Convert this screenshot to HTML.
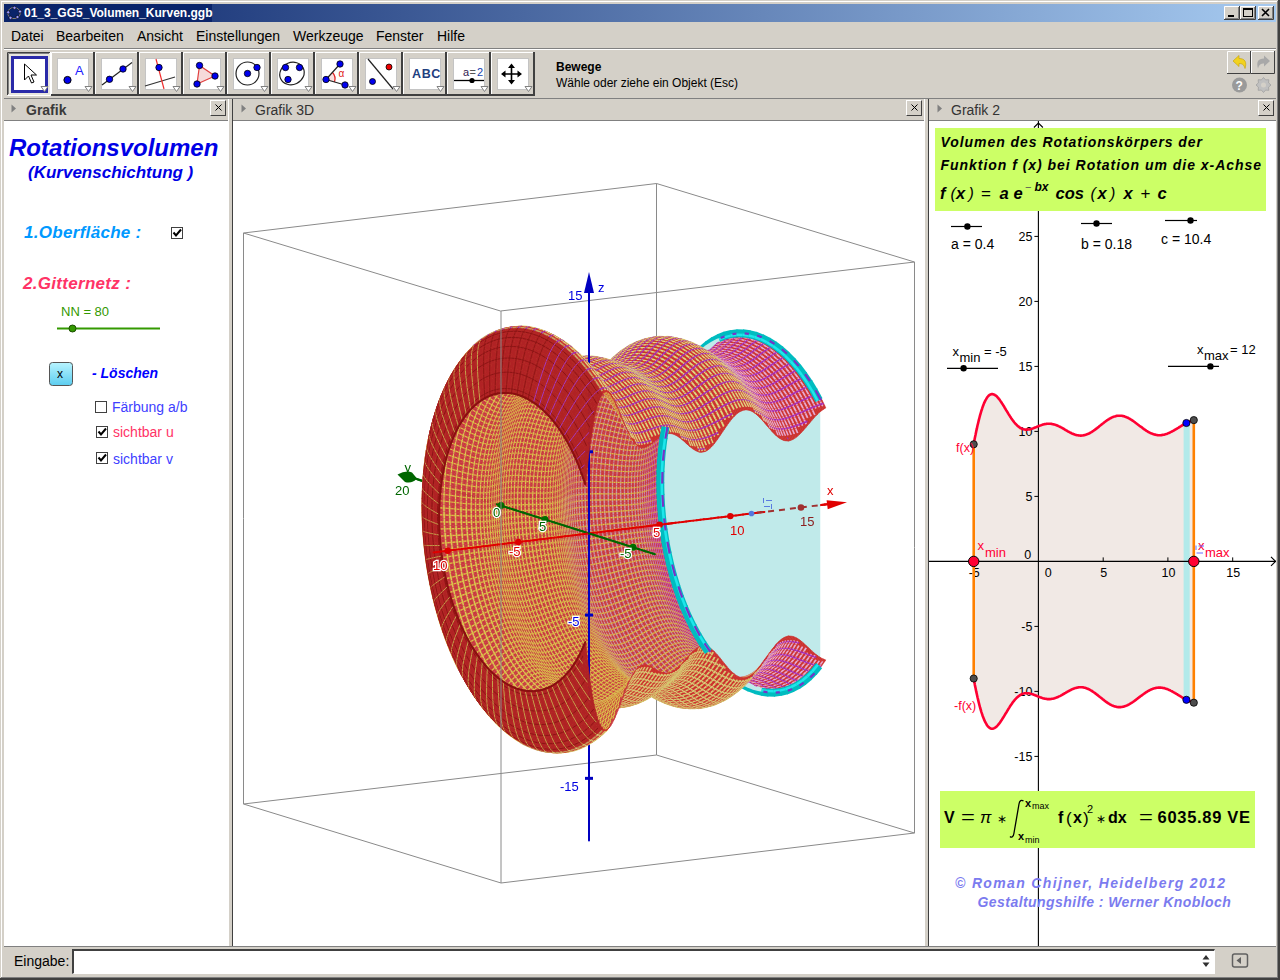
<!DOCTYPE html>
<html><head><meta charset="utf-8">
<style>
*{box-sizing:border-box}
html,body{margin:0;padding:0;width:1280px;height:980px;overflow:hidden;background:#d4d0c8;font-family:"Liberation Sans",sans-serif;position:relative}
.a{position:absolute}
.t{position:absolute;white-space:nowrap;line-height:1}
#title{left:4px;top:4px;width:1272px;height:18px;background:linear-gradient(to right,#0a246a 0%,#a6caf0 100%)}
.wb{position:absolute;top:6px;width:16px;height:14px;background:#d4d0c8;border-top:1px solid #fff;border-left:1px solid #fff;border-right:1px solid #404040;border-bottom:1px solid #404040;box-shadow:inset -1px -1px 0 #808080}
.menu{top:29px;font-size:14px;color:#000}
.tb{position:absolute;top:52px;width:44px;height:44px;background:#d4d0c8;border-top:1px solid #fff;border-left:1px solid #fff;border-right:2px solid #404040;border-bottom:2px solid #404040}
.tb .ic{position:absolute;left:6px;top:6px;width:31px;height:31px;background:#fff}
.tb .dd{position:absolute;right:3px;bottom:3px}
.ph{position:absolute;top:99px;height:22px;background:#d4d0c8;border-bottom:1px solid #808080}
.cb{position:absolute;top:100px;width:16px;height:16px;background:#d4d0c8;border-top:1px solid #fff;border-left:1px solid #fff;border-right:1px solid #404040;border-bottom:1px solid #404040}
.pane{position:absolute;top:121px;height:825px;background:#fff}
</style></head><body>
<!-- window frame -->
<div class="a" style="left:1px;top:1px;width:1px;height:977px;background:#fff"></div>
<div class="a" style="left:1px;top:1px;width:1277px;height:1px;background:#fff"></div>
<div class="a" style="left:1278px;top:0;width:2px;height:980px;background:#404040"></div>
<div class="a" style="left:1277px;top:1px;width:1px;height:977px;background:#808080"></div>
<div class="a" style="left:0;top:978px;width:1280px;height:2px;background:#404040"></div>
<div class="a" style="left:1px;top:977px;width:1277px;height:1px;background:#808080"></div>

<div id="title" class="a"></div><div class="a" style="left:4px;top:4px;width:208px;height:18px;background:#0a246a"></div>
<div class="t" style="left:24px;top:7px;font-size:12px;font-weight:bold;color:#fff">01_3_GG5_Volumen_Kurven.ggb</div>
<svg class="a" style="left:1224px;top:6px" width="50" height="14">
 <g><rect x="0" y="0" width="16" height="14" fill="#d4d0c8"/><path d="M0.5 13V0.5H15" fill="none" stroke="#fff"/><path d="M0 13.5H15.5V0" fill="none" stroke="#404040"/><path d="M1 12.5H14.5V1" fill="none" stroke="#808080"/>
 <rect x="4" y="9" width="6" height="2" fill="#000"/></g>
 <g transform="translate(16 0)"><rect x="0" y="0" width="16" height="14" fill="#d4d0c8"/><path d="M0.5 13V0.5H15" fill="none" stroke="#fff"/><path d="M0 13.5H15.5V0" fill="none" stroke="#404040"/><path d="M1 12.5H14.5V1" fill="none" stroke="#808080"/>
 <rect x="3.5" y="2.5" width="9" height="8" fill="none" stroke="#000"/><rect x="3" y="2" width="10" height="2" fill="#000"/></g>
 <g transform="translate(34 0)"><rect x="0" y="0" width="16" height="14" fill="#d4d0c8"/><path d="M0.5 13V0.5H15" fill="none" stroke="#fff"/><path d="M0 13.5H15.5V0" fill="none" stroke="#404040"/><path d="M1 12.5H14.5V1" fill="none" stroke="#808080"/>
 <path d="M4 3L11 10M11 3L4 10" stroke="#000" stroke-width="1.6"/></g>
</svg>
<svg class="a" style="left:6px;top:5px" width="17" height="16">
 <ellipse cx="8" cy="8" rx="6.3" ry="5.6" fill="none" stroke="#8a8070" stroke-width="1"/>
 <circle cx="8.5" cy="2.8" r="1.6" fill="#9999ff" stroke="#000" stroke-width="0.6"/><circle cx="14" cy="6.5" r="1.6" fill="#9999ff" stroke="#000" stroke-width="0.6"/>
 <circle cx="2.2" cy="7.3" r="1.6" fill="#9999ff" stroke="#000" stroke-width="0.6"/><circle cx="4.5" cy="12.8" r="1.6" fill="#9999ff" stroke="#000" stroke-width="0.6"/><circle cx="11.5" cy="12" r="1.6" fill="#9999ff" stroke="#000" stroke-width="0.6"/>
</svg>

<div class="t menu" style="left:11px">Datei</div>
<div class="t menu" style="left:56px">Bearbeiten</div>
<div class="t menu" style="left:137px">Ansicht</div>
<div class="t menu" style="left:196px">Einstellungen</div>
<div class="t menu" style="left:293px">Werkzeuge</div>
<div class="t menu" style="left:376px">Fenster</div>
<div class="t menu" style="left:437px">Hilfe</div>
<div class="a" style="left:4px;top:48px;width:1272px;height:1px;background:#808080"></div>
<div class="a" style="left:4px;top:49px;width:1272px;height:1px;background:#fff"></div>

<!-- toolbar -->
<div id="toolbar"><svg class="a" style="left:0;top:50px" width="1280" height="48" viewBox="0 50 1280 48">
<rect x="7" y="52" width="43" height="43" fill="#e8e6df"/>
<path d="M7.5 95V52.5H50" fill="none" stroke="#404040" stroke-width="1"/>
<path d="M8.5 94V53.5H49" fill="none" stroke="#808080" stroke-width="1"/>
<path d="M7.5 95.5H50.5V52" fill="none" stroke="#fff" stroke-width="1"/>
<rect x="12.5" y="57.5" width="34" height="34" fill="#fff" stroke="#2a2aa8" stroke-width="3"/>
<path d="M41.0 86.5H48.0L44.5 91.5Z" fill="#fff" stroke="#808080" stroke-width="1"/>
<rect x="51" y="52" width="43" height="44" fill="#d4d0c8"/>
<path d="M51.5 95V52.5H93" fill="none" stroke="#fff" stroke-width="1"/>
<path d="M51 95H94V52" fill="none" stroke="#404040" stroke-width="2"/>
<rect x="57.5" y="58.5" width="31" height="31" fill="#fff" stroke="#c4c4c4" stroke-width="1"/>
<path d="M85.0 86.5H92.0L88.5 91.5Z" fill="#fff" stroke="#808080" stroke-width="1"/>
<rect x="95" y="52" width="43" height="44" fill="#d4d0c8"/>
<path d="M95.5 95V52.5H137" fill="none" stroke="#fff" stroke-width="1"/>
<path d="M95 95H138V52" fill="none" stroke="#404040" stroke-width="2"/>
<rect x="101.5" y="58.5" width="31" height="31" fill="#fff" stroke="#c4c4c4" stroke-width="1"/>
<path d="M129.0 86.5H136.0L132.5 91.5Z" fill="#fff" stroke="#808080" stroke-width="1"/>
<rect x="139" y="52" width="43" height="44" fill="#d4d0c8"/>
<path d="M139.5 95V52.5H181" fill="none" stroke="#fff" stroke-width="1"/>
<path d="M139 95H182V52" fill="none" stroke="#404040" stroke-width="2"/>
<rect x="145.5" y="58.5" width="31" height="31" fill="#fff" stroke="#c4c4c4" stroke-width="1"/>
<path d="M173.0 86.5H180.0L176.5 91.5Z" fill="#fff" stroke="#808080" stroke-width="1"/>
<rect x="183" y="52" width="43" height="44" fill="#d4d0c8"/>
<path d="M183.5 95V52.5H225" fill="none" stroke="#fff" stroke-width="1"/>
<path d="M183 95H226V52" fill="none" stroke="#404040" stroke-width="2"/>
<rect x="189.5" y="58.5" width="31" height="31" fill="#fff" stroke="#c4c4c4" stroke-width="1"/>
<path d="M217.0 86.5H224.0L220.5 91.5Z" fill="#fff" stroke="#808080" stroke-width="1"/>
<rect x="227" y="52" width="43" height="44" fill="#d4d0c8"/>
<path d="M227.5 95V52.5H269" fill="none" stroke="#fff" stroke-width="1"/>
<path d="M227 95H270V52" fill="none" stroke="#404040" stroke-width="2"/>
<rect x="233.5" y="58.5" width="31" height="31" fill="#fff" stroke="#c4c4c4" stroke-width="1"/>
<path d="M261.0 86.5H268.0L264.5 91.5Z" fill="#fff" stroke="#808080" stroke-width="1"/>
<rect x="271" y="52" width="43" height="44" fill="#d4d0c8"/>
<path d="M271.5 95V52.5H313" fill="none" stroke="#fff" stroke-width="1"/>
<path d="M271 95H314V52" fill="none" stroke="#404040" stroke-width="2"/>
<rect x="277.5" y="58.5" width="31" height="31" fill="#fff" stroke="#c4c4c4" stroke-width="1"/>
<path d="M305.0 86.5H312.0L308.5 91.5Z" fill="#fff" stroke="#808080" stroke-width="1"/>
<rect x="315" y="52" width="43" height="44" fill="#d4d0c8"/>
<path d="M315.5 95V52.5H357" fill="none" stroke="#fff" stroke-width="1"/>
<path d="M315 95H358V52" fill="none" stroke="#404040" stroke-width="2"/>
<rect x="321.5" y="58.5" width="31" height="31" fill="#fff" stroke="#c4c4c4" stroke-width="1"/>
<path d="M349.0 86.5H356.0L352.5 91.5Z" fill="#fff" stroke="#808080" stroke-width="1"/>
<rect x="359" y="52" width="43" height="44" fill="#d4d0c8"/>
<path d="M359.5 95V52.5H401" fill="none" stroke="#fff" stroke-width="1"/>
<path d="M359 95H402V52" fill="none" stroke="#404040" stroke-width="2"/>
<rect x="365.5" y="58.5" width="31" height="31" fill="#fff" stroke="#c4c4c4" stroke-width="1"/>
<path d="M393.0 86.5H400.0L396.5 91.5Z" fill="#fff" stroke="#808080" stroke-width="1"/>
<rect x="403" y="52" width="43" height="44" fill="#d4d0c8"/>
<path d="M403.5 95V52.5H445" fill="none" stroke="#fff" stroke-width="1"/>
<path d="M403 95H446V52" fill="none" stroke="#404040" stroke-width="2"/>
<rect x="409.5" y="58.5" width="31" height="31" fill="#fff" stroke="#c4c4c4" stroke-width="1"/>
<path d="M437.0 86.5H444.0L440.5 91.5Z" fill="#fff" stroke="#808080" stroke-width="1"/>
<rect x="447" y="52" width="43" height="44" fill="#d4d0c8"/>
<path d="M447.5 95V52.5H489" fill="none" stroke="#fff" stroke-width="1"/>
<path d="M447 95H490V52" fill="none" stroke="#404040" stroke-width="2"/>
<rect x="453.5" y="58.5" width="31" height="31" fill="#fff" stroke="#c4c4c4" stroke-width="1"/>
<path d="M481.0 86.5H488.0L484.5 91.5Z" fill="#fff" stroke="#808080" stroke-width="1"/>
<rect x="491" y="52" width="43" height="44" fill="#d4d0c8"/>
<path d="M491.5 95V52.5H533" fill="none" stroke="#fff" stroke-width="1"/>
<path d="M491 95H534V52" fill="none" stroke="#404040" stroke-width="2"/>
<rect x="497.5" y="58.5" width="31" height="31" fill="#fff" stroke="#c4c4c4" stroke-width="1"/>
<path d="M525.0 86.5H532.0L528.5 91.5Z" fill="#fff" stroke="#808080" stroke-width="1"/>
<path d="M24.5 64V80L28.5 76L31.5 83L34.0 82L31.0 75H36.5Z" fill="#fff" stroke="#000" stroke-width="1" stroke-linejoin="miter"/>
<circle cx="67.5" cy="80" r="3.6" fill="#0000ee" stroke="#000" stroke-width="1"/>
<text x="75" y="74.5" font-family="Liberation Sans" font-size="13" fill="#2020ff">A</text>
<line x1="102" y1="85" x2="132" y2="62.5" stroke="#222" stroke-width="1.2"/>
<circle cx="109.5" cy="79.3" r="3.2" fill="#0000ee" stroke="#000" stroke-width="0.8"/><circle cx="123" cy="69" r="3.2" fill="#0000ee" stroke="#000" stroke-width="0.8"/>
<line x1="145" y1="86" x2="175" y2="77" stroke="#333" stroke-width="1.2"/>
<line x1="156" y1="59" x2="164" y2="89" stroke="#f03030" stroke-width="1.2"/>
<circle cx="159" cy="67.5" r="3.2" fill="#0000ee" stroke="#000" stroke-width="0.8"/>
<path d="M199.5 65.5L215 76L197 84Z" fill="#f6dada" stroke="#e04040" stroke-width="1.2"/>
<circle cx="199.5" cy="65.5" r="3.2" fill="#0000ee" stroke="#000" stroke-width="0.8"/>
<circle cx="215" cy="76" r="3.2" fill="#0000ee" stroke="#000" stroke-width="0.8"/>
<circle cx="197" cy="84" r="3.2" fill="#0000ee" stroke="#000" stroke-width="0.8"/>
<circle cx="247.5" cy="73.5" r="11.5" fill="none" stroke="#222" stroke-width="1.2"/>
<circle cx="247.5" cy="73.5" r="3.2" fill="#0000ee" stroke="#000" stroke-width="0.8"/><circle cx="257" cy="67.5" r="3.2" fill="#0000ee" stroke="#000" stroke-width="0.8"/>
<ellipse cx="292" cy="73.5" rx="12.5" ry="11" transform="rotate(-25 292 73.5)" fill="none" stroke="#222" stroke-width="1.2"/>
<circle cx="285.5" cy="67.5" r="3.2" fill="#0000ee" stroke="#000" stroke-width="0.8"/>
<circle cx="299.5" cy="67.5" r="3.2" fill="#0000ee" stroke="#000" stroke-width="0.8"/>
<circle cx="288" cy="79.5" r="3.2" fill="#0000ee" stroke="#000" stroke-width="0.8"/>
<path d="M326 79.5L332.5 72.5A9 9 0 0 1 334.5 82Z" fill="#fae0e0"/>
<path d="M332.5 72.5A9.5 9.5 0 0 1 334.5 82" fill="none" stroke="#e02020" stroke-width="1.2"/>
<path d="M340 64L326 79.5L345 85" fill="none" stroke="#222" stroke-width="1.2"/>
<text x="338.5" y="77" font-family="Liberation Sans" font-size="10" fill="#e02020">α</text>
<circle cx="340" cy="64" r="3.2" fill="#0000ee" stroke="#000" stroke-width="0.8"/>
<circle cx="326" cy="79.5" r="3.2" fill="#0000ee" stroke="#000" stroke-width="0.8"/>
<circle cx="345" cy="85" r="3.2" fill="#0000ee" stroke="#000" stroke-width="0.8"/>
<line x1="368" y1="59" x2="393" y2="89" stroke="#222" stroke-width="1.2"/>
<circle cx="372.5" cy="81.5" r="3" fill="#0000ee" stroke="#000" stroke-width="0.8"/><circle cx="389" cy="67" r="3" fill="#ee0000" stroke="#000" stroke-width="0.8"/>
<text x="412" y="78" font-family="Liberation Sans" font-size="12.5" font-weight="bold" fill="#1f3f7f" letter-spacing="0.6">ABC</text>
<text x="463" y="76" font-family="Liberation Sans" font-size="11" fill="#302050">a</text><text x="469.5" y="76" font-family="Liberation Sans" font-size="11" fill="#555">=</text><text x="477" y="76" font-family="Liberation Sans" font-size="11" fill="#1040b0">2</text>
<line x1="454" y1="80.5" x2="484" y2="80.5" stroke="#000" stroke-width="1.3"/><circle cx="472" cy="80.5" r="2.6" fill="#000"/>
<path d="M511.5 65V83M502.5 74H520.5" stroke="#000" stroke-width="1.6"/>
<path d="M511.5 63.5L508.0 68H515.0Z M511.5 84.5L508.0 80H515.0Z M501.0 74L505.5 70.5V77.5Z M522.0 74L517.5 70.5V77.5Z" fill="#000"/>
<rect x="1227" y="51" width="24" height="23" fill="#d4d0c8"/>
<path d="M1227.5 73V51.5H1250" fill="none" stroke="#fff"/><path d="M1227 73.5H1250.5V51" fill="none" stroke="#404040"/>
<rect x="1251" y="51" width="24" height="23" fill="#d4d0c8"/>
<path d="M1251.5 73V51.5H1274" fill="none" stroke="#fff"/><path d="M1251 73.5H1274.5V51" fill="none" stroke="#404040"/>
<path d="M1233 61L1239 55.5V58.5C1245 58.5 1247 62 1245 68.5C1244 64.5 1242 63.5 1239 63.5V66.5Z" fill="#f2d21e" stroke="#c8a810" stroke-width="0.7"/>
<path d="M1270 61L1264 55.5V58.5C1258 58.5 1256 62 1258 68.5C1259 64.5 1261 63.5 1264 63.5V66.5Z" fill="#a8a8a8"/>
<circle cx="1239.5" cy="85" r="7.5" fill="#9a9a9a"/><text x="1235.5" y="89.5" font-family="Liberation Sans" font-size="12" font-weight="bold" fill="#fff">?</text>
<path d="M1271.0 85.0L1268.6 87.1L1268.8 90.3L1265.6 90.1L1263.5 92.5L1261.4 90.1L1258.2 90.3L1258.4 87.1L1256.0 85.0L1258.4 82.9L1258.2 79.7L1261.4 79.9L1263.5 77.5L1265.6 79.9L1268.8 79.7L1268.6 82.9Z" fill="#c0c0c0" stroke="#a0a0a0" stroke-width="0.8"/><circle cx="1263.5" cy="85" r="2.5" fill="#d4d0c8"/>
</svg></div>

<div class="a" style="left:4px;top:98px;width:1272px;height:1px;background:#808080"></div>

<!-- panel headers -->
<div class="ph" style="left:4px;width:225px"></div>
<div class="ph" style="left:233px;width:691px"></div>
<div class="ph" style="left:929px;width:347px"></div>
<div class="a" style="left:228px;top:99px;width:1px;height:847px;background:#fff"></div>
<div class="a" style="left:232px;top:99px;width:1px;height:847px;background:#404040"></div>
<div class="a" style="left:924px;top:99px;width:1px;height:847px;background:#fff"></div>
<div class="a" style="left:928px;top:99px;width:1px;height:847px;background:#404040"></div>

<div class="pane" style="left:4px;width:224px"></div>
<div class="pane" style="left:233px;width:691px"><svg id="fb" style="position:absolute;left:0;top:0" width="691" height="825" shape-rendering="crispEdges">
<path fill="#6464dc" d="M354 156h6v6H354z"/>
<path fill="#c8c8f0" d="M348 162h6v6H348zM366 162h6v6H366zM336 168h6v6H336zM366 168h6v6H366zM342 174h6v6H342zM330 660h12v6H330zM330 666h6v6H330z"/>
<path fill="#1414c8" d="M354 162h6v6H354z"/>
<path fill="#b4b4f0" d="M342 168h12v6H342zM336 174h6v6H336zM354 198h6v6H354zM354 204h6v6H354zM354 630h6v6H354zM354 678h6v6H354zM354 714h6v6H354z"/>
<path fill="#3c3cc8" d="M354 168h6v6H354z"/>
<path fill="#a0a0dc" d="M354 174h6v6H354zM354 636h6v6H354zM354 642h6v6H354z"/>
<path fill="#a0a0f0" d="M354 180h6v6H354zM354 186h6v6H354zM354 192h6v6H354zM354 210h6v6H354zM354 216h6v6H354zM354 222h6v6H354zM354 228h6v6H354zM354 648h6v6H354zM354 660h6v6H354zM354 666h6v6H354zM354 672h6v6H354zM354 684h6v6H354zM354 690h6v6H354zM354 696h6v6H354zM354 702h6v6H354zM354 708h6v6H354z"/>
<path fill="#dcc8b4" d="M264 204h6v6H264zM450 216h6v6H450zM186 420h6v6H186zM420 576h6v6H420zM318 630h6v6H318z"/>
<path fill="#dc8c8c" d="M270 204h6v6H270zM444 216h6v6H444zM510 264h6v6H510zM516 276h6v6H516zM522 282h6v6H522zM204 438h6v6H204zM240 576h6v6H240z"/>
<path fill="#c86464" d="M276 204h6v6H276zM330 222h6v6H330zM408 222h36v6H408zM336 228h6v6H336zM402 228h18v6H402zM426 228h30v6H426zM396 234h36v6H396zM438 234h6v6H438zM456 234h6v6H456zM360 240h12v6H360zM408 240h18v6H408zM444 240h6v6H444zM354 246h6v6H354zM372 246h6v6H372zM420 246h36v6H420zM474 246h6v6H474zM378 252h6v6H378zM432 252h24v6H432zM474 252h12v6H474zM378 258h6v6H378zM444 258h18v6H444zM366 264h6v6H366zM384 264h6v6H384zM456 264h12v6H456zM474 264h12v6H474zM378 270h6v6H378zM396 270h6v6H396zM456 270h6v6H456zM492 270h6v6H492zM204 276h6v6H204zM402 276h12v6H402zM462 276h6v6H462zM474 276h12v6H474zM390 282h12v6H390zM462 282h6v6H462zM492 282h6v6H492zM402 288h12v6H402zM474 288h12v6H474zM198 294h6v6H198zM372 294h6v6H372zM414 294h12v6H414zM462 294h6v6H462zM576 294h6v6H576zM366 300h6v6H366zM402 300h6v6H402zM480 300h6v6H480zM360 306h6v6H360zM372 306h6v6H372zM390 306h6v6H390zM408 306h12v6H408zM468 306h6v6H468zM360 312h6v6H360zM468 312h12v6H468zM366 318h6v6H366zM378 318h6v6H378zM408 318h6v6H408zM378 324h6v6H378zM414 324h6v6H414zM468 324h6v6H468zM360 330h6v6H360zM372 330h6v6H372zM384 330h6v6H384zM396 330h24v6H396zM360 336h6v6H360zM372 336h6v6H372zM384 336h6v6H384zM396 336h24v6H396zM372 342h6v6H372zM384 342h6v6H384zM402 342h18v6H402zM366 348h6v6H366zM390 348h6v6H390zM402 348h18v6H402zM336 354h6v6H336zM366 354h6v6H366zM390 354h24v6H390zM336 360h6v6H336zM366 360h6v6H366zM378 360h6v6H378zM390 360h12v6H390zM408 360h6v6H408zM336 366h18v6H336zM366 366h6v6H366zM378 366h6v6H378zM390 366h24v6H390zM342 372h6v6H342zM402 372h12v6H402zM342 378h6v6H342zM402 378h12v6H402zM348 384h6v6H348zM378 384h12v6H378zM396 384h6v6H396zM408 384h6v6H408zM360 390h24v6H360zM396 390h6v6H396zM408 390h6v6H408zM348 402h6v6H348zM384 402h6v6H384zM396 408h18v6H396zM348 414h6v6H348zM402 414h6v6H402zM408 420h6v6H408zM366 426h6v6H366zM348 432h6v6H348zM378 432h6v6H378zM402 432h6v6H402zM396 438h6v6H396zM360 444h6v6H360zM372 444h6v6H372zM420 444h6v6H420zM360 450h6v6H360zM384 450h6v6H384zM414 450h12v6H414zM360 456h6v6H360zM390 456h6v6H390zM420 456h6v6H420zM360 462h12v6H360zM414 462h12v6H414zM360 468h6v6H360zM372 468h6v6H372zM396 468h6v6H396zM408 468h12v6H408zM426 468h6v6H426zM366 474h6v6H366zM396 474h6v6H396zM408 474h6v6H408zM372 480h6v6H372zM396 480h6v6H396zM366 486h6v6H366zM396 486h6v6H396zM408 486h6v6H408zM420 486h18v6H420zM372 492h6v6H372zM408 492h6v6H408zM420 492h6v6H420zM378 498h6v6H378zM378 504h6v6H378zM396 504h6v6H396zM432 504h6v6H432zM384 510h6v6H384zM426 510h6v6H426zM396 516h6v6H396zM402 540h6v6H402z"/>
<path fill="#c85050" d="M282 204h6v6H282zM360 294h6v6H360zM492 294h6v6H492zM360 300h6v6H360zM552 312h12v6H552zM396 318h6v6H396zM342 348h6v6H342zM360 360h6v6H360zM390 402h6v6H390z"/>
<path fill="#c86450" d="M288 204h6v6H288zM246 216h6v6H246zM342 234h6v6H342zM348 240h6v6H348zM456 252h6v6H456zM450 264h6v6H450zM480 270h6v6H480zM366 276h6v6H366zM246 282h6v6H246zM366 282h12v6H366zM246 288h6v6H246zM366 288h18v6H366zM462 288h6v6H462zM582 288h6v6H582zM240 294h12v6H240zM294 294h6v6H294zM366 294h6v6H366zM378 294h12v6H378zM234 300h12v6H234zM252 300h6v6H252zM300 300h6v6H300zM372 300h6v6H372zM384 300h6v6H384zM468 300h6v6H468zM486 300h6v6H486zM246 306h6v6H246zM258 306h6v6H258zM306 306h6v6H306zM366 306h6v6H366zM378 306h12v6H378zM480 306h12v6H480zM228 312h18v6H228zM312 312h6v6H312zM366 312h18v6H366zM390 312h6v6H390zM228 318h12v6H228zM246 318h6v6H246zM318 318h6v6H318zM360 318h6v6H360zM372 318h6v6H372zM384 318h6v6H384zM222 324h30v6H222zM294 324h6v6H294zM360 324h18v6H360zM384 324h6v6H384zM402 324h6v6H402zM462 324h6v6H462zM222 330h12v6H222zM240 330h6v6H240zM252 330h6v6H252zM282 330h6v6H282zM300 330h6v6H300zM366 330h6v6H366zM378 330h6v6H378zM390 330h6v6H390zM222 336h12v6H222zM240 336h6v6H240zM288 336h6v6H288zM300 336h6v6H300zM336 336h6v6H336zM366 336h6v6H366zM378 336h6v6H378zM390 336h6v6H390zM216 342h12v6H216zM234 342h6v6H234zM246 342h6v6H246zM288 342h6v6H288zM306 342h6v6H306zM360 342h12v6H360zM378 342h6v6H378zM390 342h12v6H390zM222 348h12v6H222zM246 348h6v6H246zM294 348h6v6H294zM312 348h6v6H312zM360 348h6v6H360zM372 348h18v6H372zM396 348h6v6H396zM216 354h18v6H216zM294 354h6v6H294zM342 354h6v6H342zM360 354h6v6H360zM372 354h18v6H372zM216 360h12v6H216zM240 360h6v6H240zM282 360h6v6H282zM294 360h6v6H294zM342 360h6v6H342zM372 360h6v6H372zM384 360h6v6H384zM402 360h6v6H402zM234 366h6v6H234zM282 366h6v6H282zM360 366h6v6H360zM372 366h6v6H372zM384 366h6v6H384zM210 372h6v6H210zM282 372h6v6H282zM300 372h6v6H300zM360 372h6v6H360zM372 372h6v6H372zM384 372h6v6H384zM210 378h6v6H210zM234 378h12v6H234zM282 378h6v6H282zM360 378h6v6H360zM372 378h6v6H372zM384 378h6v6H384zM234 384h12v6H234zM360 384h6v6H360zM372 384h6v6H372zM240 390h6v6H240zM366 396h6v6H366zM378 396h6v6H378zM390 396h6v6H390zM210 402h12v6H210zM294 402h6v6H294zM366 402h6v6H366zM378 402h6v6H378zM210 408h18v6H210zM240 408h6v6H240zM294 408h6v6H294zM336 408h6v6H336zM390 408h6v6H390zM222 414h12v6H222zM342 414h6v6H342zM384 414h6v6H384zM396 414h6v6H396zM228 420h6v6H228zM360 420h6v6H360zM372 420h6v6H372zM378 426h6v6H378zM234 432h6v6H234zM366 432h6v6H366zM234 438h12v6H234zM360 438h6v6H360zM372 438h6v6H372zM384 438h6v6H384zM240 444h6v6H240zM378 444h6v6H378zM390 444h6v6H390zM402 444h6v6H402zM216 450h6v6H216zM366 450h6v6H366zM378 450h6v6H378zM396 450h6v6H396zM216 456h12v6H216zM372 456h6v6H372zM384 456h6v6H384zM402 456h6v6H402zM222 462h6v6H222zM378 462h6v6H378zM390 462h12v6H390zM228 468h6v6H228zM246 468h6v6H246zM384 468h6v6H384zM402 468h6v6H402zM228 474h6v6H228zM378 474h6v6H378zM390 474h6v6H390zM228 480h6v6H228zM384 480h6v6H384zM402 480h6v6H402zM234 486h6v6H234zM246 486h6v6H246zM378 486h6v6H378zM390 486h6v6H390zM234 492h6v6H234zM384 492h6v6H384zM402 492h6v6H402zM396 498h6v6H396zM240 504h6v6H240zM390 504h6v6H390zM408 504h6v6H408zM402 510h6v6H402zM450 534h6v6H450zM480 534h6v6H480zM408 540h12v6H408zM486 540h6v6H486zM426 546h6v6H426zM492 546h6v6H492zM498 552h6v6H498zM246 582h6v6H246zM276 612h6v6H276z"/>
<path fill="#c87878" d="M294 204h6v6H294zM324 216h6v6H324zM414 216h6v6H414zM432 216h6v6H432zM402 222h6v6H402zM390 228h12v6H390zM384 234h12v6H384zM396 240h12v6H396zM480 240h6v6H480zM366 252h6v6H366zM396 252h6v6H396zM414 252h6v6H414zM402 258h6v6H402zM486 258h6v6H486zM372 264h6v6H372zM438 276h6v6H438zM420 282h6v6H420zM426 300h12v6H426zM450 300h6v6H450zM456 306h6v6H456zM192 318h6v6H192zM450 318h6v6H450zM474 324h6v6H474zM186 372h6v6H186zM186 378h6v6H186zM186 384h6v6H186zM186 390h6v6H186zM492 390h12v6H492zM414 408h6v6H414zM192 450h6v6H192zM444 504h6v6H444zM450 510h6v6H450zM210 516h6v6H210zM570 522h6v6H570zM576 528h6v6H576z"/>
<path fill="#dca0a0" d="M300 204h6v6H300zM252 210h6v6H252zM408 216h6v6H408zM462 222h6v6H462zM378 234h6v6H378zM192 312h6v6H192zM192 456h6v6H192zM216 534h6v6H216zM228 558h6v6H228zM294 624h6v6H294z"/>
<path fill="#f0dcc8" d="M306 204h6v6H306zM390 222h6v6H390zM492 576h6v6H492zM432 582h6v6H432zM480 582h6v6H480zM258 600h6v6H258zM330 630h6v6H330z"/>
<path fill="#c8f0f0" d="M498 204h6v6H498zM510 204h6v6H510zM540 216h6v6H540zM504 294h18v6H504zM498 300h30v6H498zM582 300h6v6H582zM498 306h36v6H498zM576 306h12v6H576zM492 312h48v6H492zM570 312h18v6H570zM438 318h6v6H438zM486 318h60v6H486zM564 318h24v6H564zM438 324h12v6H438zM480 324h108v6H480zM438 330h24v6H438zM474 330h114v6H474zM438 336h150v6H438zM432 342h156v6H432zM432 348h156v6H432zM432 354h156v6H432zM432 360h156v6H432zM432 366h156v6H432zM432 372h96v6H432zM534 372h54v6H534zM432 378h96v6H432zM540 378h24v6H540zM570 378h12v6H570zM438 384h90v6H438zM438 390h42v6H438zM546 390h42v6H546zM504 396h60v6H504zM582 396h6v6H582zM450 402h48v6H450zM516 402h48v6H516zM582 402h6v6H582zM438 408h60v6H438zM516 408h72v6H516zM438 414h150v6H438zM438 420h150v6H438zM444 426h144v6H444zM444 432h144v6H444zM444 438h144v6H444zM444 444h144v6H444zM450 450h138v6H450zM450 456h138v6H450zM450 462h138v6H450zM456 468h132v6H456zM456 474h132v6H456zM456 480h132v6H456zM462 486h126v6H462zM462 492h126v6H462zM468 498h120v6H468zM468 504h120v6H468zM474 510h78v6H474zM564 510h24v6H564zM474 516h66v6H474zM570 516h18v6H570zM480 522h54v6H480zM576 522h12v6H576zM486 528h48v6H486zM492 534h36v6H492zM498 540h24v6H498zM504 546h12v6H504z"/>
<path fill="#b4f0f0" d="M504 204h6v6H504zM570 246h6v6H570zM432 336h6v6H432zM528 372h6v6H528zM432 384h6v6H432zM438 426h6v6H438zM444 450h6v6H444zM450 468h6v6H450zM462 498h6v6H462zM516 570h6v6H516z"/>
<path fill="#b43c3c" d="M258 210h6v6H258zM306 210h6v6H306zM348 246h6v6H348zM354 252h6v6H354zM360 288h6v6H360zM354 318h6v6H354zM342 342h6v6H342zM222 540h6v6H222zM228 552h6v6H228zM264 588h6v6H264zM258 594h6v6H258zM288 618h6v6H288z"/>
<path fill="#a03c3c" d="M264 210h6v6H264zM264 228h6v6H264zM264 240h6v6H264zM264 252h6v6H264zM264 258h6v6H264zM264 594h6v6H264z"/>
<path fill="#a02828" d="M270 210h12v6H270zM288 210h12v6H288zM252 216h36v6H252zM294 216h12v6H294zM312 216h6v6H312zM246 222h6v6H246zM264 222h30v6H264zM306 222h6v6H306zM246 228h12v6H246zM294 228h6v6H294zM246 234h6v6H246zM258 234h36v6H258zM246 240h12v6H246zM294 240h12v6H294zM270 246h12v6H270zM252 252h12v6H252zM282 252h12v6H282zM246 258h6v6H246zM258 264h6v6H258zM270 264h18v6H270zM258 270h6v6H258zM282 270h6v6H282zM294 270h6v6H294zM354 270h6v6H354zM294 276h6v6H294zM234 282h6v6H234zM306 282h6v6H306zM312 288h6v6H312zM318 294h6v6H318zM222 300h6v6H222zM216 312h6v6H216zM330 312h6v6H330zM336 318h6v6H336zM210 324h6v6H210zM336 324h6v6H336zM210 330h6v6H210zM342 330h6v6H342zM192 336h6v6H192zM342 336h6v6H342zM192 348h6v6H192zM204 348h6v6H204zM192 354h6v6H192zM348 354h6v6H348zM204 360h6v6H204zM204 366h6v6H204zM204 372h6v6H204zM192 414h6v6H192zM204 414h6v6H204zM204 420h6v6H204zM192 426h6v6H192zM192 432h6v6H192zM204 432h6v6H204zM210 456h6v6H210zM210 462h6v6H210zM198 468h6v6H198zM210 468h6v6H210zM216 480h6v6H216zM216 486h6v6H216zM210 504h6v6H210zM234 522h6v6H234zM240 528h6v6H240zM240 534h6v6H240zM246 540h6v6H246zM342 540h6v6H342zM252 546h6v6H252zM336 546h6v6H336zM318 564h6v6H318zM294 570h12v6H294z"/>
<path fill="#b42828" d="M282 210h6v6H282zM300 210h6v6H300zM288 216h6v6H288zM306 216h6v6H306zM252 222h12v6H252zM294 222h12v6H294zM312 222h6v6H312zM258 228h6v6H258zM270 228h24v6H270zM300 228h12v6H300zM318 228h6v6H318zM330 228h6v6H330zM252 234h6v6H252zM294 234h18v6H294zM318 234h24v6H318zM258 240h6v6H258zM270 240h24v6H270zM306 240h6v6H306zM324 240h6v6H324zM336 240h6v6H336zM246 246h18v6H246zM282 246h24v6H282zM312 246h6v6H312zM330 246h6v6H330zM342 246h6v6H342zM246 252h6v6H246zM270 252h12v6H270zM294 252h12v6H294zM318 252h6v6H318zM330 252h24v6H330zM252 258h12v6H252zM270 258h36v6H270zM324 258h6v6H324zM336 258h6v6H336zM348 258h6v6H348zM246 264h12v6H246zM288 264h12v6H288zM306 264h12v6H306zM330 264h6v6H330zM342 264h6v6H342zM354 264h12v6H354zM210 270h6v6H210zM246 270h6v6H246zM312 270h12v6H312zM330 270h12v6H330zM348 270h6v6H348zM324 276h6v6H324zM336 276h6v6H336zM348 276h6v6H348zM360 276h6v6H360zM204 282h6v6H204zM330 282h6v6H330zM342 282h6v6H342zM354 282h12v6H354zM204 288h6v6H204zM228 288h6v6H228zM318 288h6v6H318zM330 288h12v6H330zM348 288h12v6H348zM204 294h12v6H204zM324 294h6v6H324zM336 294h6v6H336zM348 294h6v6H348zM330 300h6v6H330zM342 300h6v6H342zM354 300h6v6H354zM198 306h6v6H198zM336 306h6v6H336zM348 306h12v6H348zM198 312h18v6H198zM342 312h6v6H342zM198 318h6v6H198zM348 318h6v6H348zM342 324h12v6H342zM198 330h12v6H198zM198 336h6v6H198zM348 336h6v6H348zM192 342h18v6H192zM348 342h6v6H348zM198 348h6v6H198zM348 348h6v6H348zM198 354h6v6H198zM192 360h12v6H192zM192 366h12v6H192zM192 372h12v6H192zM192 378h18v6H192zM198 384h6v6H198zM192 390h12v6H192zM198 396h12v6H198zM192 402h18v6H192zM204 408h6v6H204zM198 414h6v6H198zM192 420h6v6H192zM198 432h6v6H198zM198 450h12v6H198zM198 456h6v6H198zM198 462h12v6H198zM204 468h6v6H204zM204 474h12v6H204zM204 480h12v6H204zM204 486h12v6H204zM204 492h18v6H204zM210 498h6v6H210zM216 504h6v6H216zM216 510h6v6H216zM222 516h12v6H222zM216 522h6v6H216zM228 522h6v6H228zM348 528h6v6H348zM222 534h6v6H222zM348 534h6v6H348zM348 540h6v6H348zM348 546h6v6H348zM234 552h6v6H234zM336 552h12v6H336zM234 558h6v6H234zM330 558h6v6H330zM348 558h6v6H348zM342 564h6v6H342zM330 570h12v6H330zM354 570h6v6H354zM342 576h18v6H342zM336 582h12v6H336zM354 582h6v6H354zM324 588h12v6H324zM348 588h6v6H348zM312 594h12v6H312zM342 594h6v6H342zM354 594h6v6H354zM294 600h12v6H294zM330 600h12v6H330zM348 600h18v6H348zM324 606h12v6H324zM342 606h24v6H342zM312 612h12v6H312zM336 612h24v6H336zM294 618h18v6H294zM324 618h12v6H324zM342 618h6v6H342zM312 624h18v6H312z"/>
<path fill="#c87864" d="M312 210h6v6H312zM420 216h12v6H420zM444 222h18v6H444zM456 228h12v6H456zM462 234h12v6H462zM354 240h6v6H354zM372 240h6v6H372zM432 240h6v6H432zM468 240h6v6H468zM360 246h12v6H360zM378 246h12v6H378zM408 246h12v6H408zM360 252h6v6H360zM372 252h6v6H372zM384 252h12v6H384zM420 252h12v6H420zM486 252h6v6H486zM372 258h6v6H372zM390 258h12v6H390zM426 258h12v6H426zM474 258h6v6H474zM492 258h6v6H492zM378 264h6v6H378zM396 264h6v6H396zM432 264h12v6H432zM498 264h6v6H498zM384 270h12v6H384zM402 270h12v6H402zM438 270h12v6H438zM462 270h6v6H462zM384 276h12v6H384zM414 276h6v6H414zM444 276h6v6H444zM504 276h6v6H504zM384 282h6v6H384zM414 282h6v6H414zM444 282h12v6H444zM480 282h6v6H480zM396 288h6v6H396zM450 288h6v6H450zM492 288h6v6H492zM408 294h6v6H408zM426 294h6v6H426zM456 294h6v6H456zM378 300h6v6H378zM396 300h6v6H396zM408 300h6v6H408zM420 300h6v6H420zM456 300h6v6H456zM402 306h6v6H402zM420 306h6v6H420zM462 306h6v6H462zM384 312h6v6H384zM444 312h6v6H444zM402 318h6v6H402zM462 318h6v6H462zM390 324h6v6H390zM336 342h6v6H336zM336 348h6v6H336zM336 372h6v6H336zM348 372h6v6H348zM366 372h6v6H366zM378 372h6v6H378zM390 372h12v6H390zM330 378h12v6H330zM348 378h6v6H348zM366 378h6v6H366zM378 378h6v6H378zM390 378h12v6H390zM330 384h18v6H330zM366 384h6v6H366zM390 384h6v6H390zM402 384h6v6H402zM330 390h24v6H330zM384 390h12v6H384zM402 390h6v6H402zM330 396h24v6H330zM360 396h6v6H360zM372 396h6v6H372zM384 396h6v6H384zM396 396h18v6H396zM342 402h6v6H342zM360 402h6v6H360zM372 402h6v6H372zM390 414h6v6H390zM408 414h6v6H408zM336 420h18v6H336zM366 420h6v6H366zM336 426h18v6H336zM360 426h6v6H360zM372 426h6v6H372zM384 426h6v6H384zM336 432h12v6H336zM360 432h6v6H360zM372 432h6v6H372zM408 432h6v6H408zM342 438h12v6H342zM366 438h6v6H366zM378 438h6v6H378zM390 438h6v6H390zM402 438h18v6H402zM342 444h12v6H342zM366 444h6v6H366zM384 444h6v6H384zM396 444h6v6H396zM408 444h12v6H408zM342 450h12v6H342zM372 450h6v6H372zM390 450h6v6H390zM402 450h12v6H402zM348 456h6v6H348zM366 456h6v6H366zM378 456h6v6H378zM396 456h6v6H396zM408 456h12v6H408zM348 462h6v6H348zM372 462h6v6H372zM384 462h6v6H384zM402 462h12v6H402zM348 468h6v6H348zM366 468h6v6H366zM378 468h6v6H378zM390 468h6v6H390zM420 468h6v6H420zM360 474h6v6H360zM372 474h6v6H372zM384 474h6v6H384zM402 474h6v6H402zM414 474h18v6H414zM360 480h12v6H360zM378 480h6v6H378zM390 480h6v6H390zM408 480h30v6H408zM360 486h6v6H360zM372 486h6v6H372zM384 486h6v6H384zM402 486h6v6H402zM414 486h6v6H414zM360 492h12v6H360zM378 492h6v6H378zM390 492h12v6H390zM414 492h6v6H414zM426 492h12v6H426zM204 498h6v6H204zM360 498h18v6H360zM384 498h12v6H384zM402 498h12v6H402zM420 498h24v6H420zM366 504h12v6H366zM384 504h6v6H384zM402 504h6v6H402zM414 504h18v6H414zM438 504h6v6H438zM366 510h18v6H366zM390 510h12v6H390zM408 510h12v6H408zM432 510h18v6H432zM372 516h24v6H372zM402 516h18v6H402zM426 516h30v6H426zM378 522h84v6H378zM384 528h72v6H384zM384 534h66v6H384zM390 540h12v6H390zM420 540h6v6H420zM432 540h12v6H432zM396 546h6v6H396zM516 552h6v6H516z"/>
<path fill="#f0c8c8" d="M318 210h6v6H318zM402 216h6v6H402zM372 234h6v6H372zM216 246h6v6H216zM192 306h6v6H192zM186 342h6v6H186zM600 384h6v6H600zM192 462h6v6H192zM198 486h6v6H198zM210 522h6v6H210zM588 534h6v6H588zM312 630h6v6H312z"/>
<path fill="#a0f0f0" d="M480 210h6v6H480z"/>
<path fill="#3cb4c8" d="M486 210h6v6H486zM534 216h6v6H534zM570 258h6v6H570zM576 546h6v6H576zM552 564h6v6H552zM528 570h6v6H528z"/>
<path fill="#14c8c8" d="M492 210h6v6H492zM504 210h6v6H504zM516 210h6v6H516zM528 216h6v6H528zM540 222h6v6H540zM552 234h6v6H552zM564 246h6v6H564zM576 264h6v6H576zM426 318h6v6H426zM426 324h6v6H426zM432 432h6v6H432zM438 456h6v6H438zM558 564h6v6H558zM534 570h6v6H534z"/>
<path fill="#28a0c8" d="M498 210h6v6H498zM510 210h6v6H510zM426 336h6v6H426zM426 372h6v6H426zM462 510h6v6H462zM468 522h6v6H468z"/>
<path fill="#50b4dc" d="M522 210h6v6H522z"/>
<path fill="#a0dcf0" d="M528 210h6v6H528z"/>
<path fill="#b4503c" d="M318 216h6v6H318zM240 222h6v6H240zM234 228h6v6H234zM210 264h6v6H210zM306 288h6v6H306zM312 294h6v6H312zM336 330h6v6H336zM210 342h6v6H210zM228 504h6v6H228zM234 516h6v6H234zM216 528h6v6H216zM354 552h6v6H354zM354 558h6v6H354zM264 564h6v6H264zM306 564h6v6H306zM264 570h6v6H264zM264 576h6v6H264zM264 582h6v6H264zM252 588h6v6H252zM264 600h6v6H264zM270 606h6v6H270zM336 624h6v6H336z"/>
<path fill="#c88c64" d="M438 216h6v6H438zM378 240h6v6H378zM408 264h6v6H408zM414 270h6v6H414zM432 294h6v6H432zM390 300h6v6H390zM450 306h6v6H450zM402 312h6v6H402zM456 318h6v6H456zM264 396h6v6H264zM312 402h6v6H312zM336 438h6v6H336zM342 456h6v6H342zM342 462h6v6H342zM348 474h6v6H348zM348 480h6v6H348zM336 504h6v6H336zM360 504h6v6H360zM366 516h6v6H366zM372 522h6v6H372zM372 528h12v6H372zM378 534h6v6H378zM384 540h6v6H384zM390 546h6v6H390zM396 552h6v6H396zM354 618h6v6H354zM342 624h6v6H342z"/>
<path fill="#50c8dc" d="M474 216h6v6H474zM576 258h6v6H576z"/>
<path fill="#78c8dc" d="M480 216h6v6H480z"/>
<path fill="#648cb4" d="M486 216h6v6H486zM582 276h6v6H582z"/>
<path fill="#8c78a0" d="M492 216h6v6H492zM558 246h6v6H558z"/>
<path fill="#b4648c" d="M498 216h18v6H498zM528 222h6v6H528zM432 456h6v6H432zM438 474h6v6H438zM576 540h6v6H576zM564 552h6v6H564z"/>
<path fill="#8c8ca0" d="M516 216h6v6H516zM582 540h6v6H582zM558 558h6v6H558z"/>
<path fill="#50a0c8" d="M522 216h6v6H522zM534 222h6v6H534zM432 420h6v6H432z"/>
<path fill="#b4283c" d="M318 222h6v6H318zM312 228h6v6H312zM324 228h6v6H324zM312 234h6v6H312zM312 240h12v6H312zM330 240h6v6H330zM342 240h6v6H342zM306 246h6v6H306zM318 246h12v6H318zM336 246h6v6H336zM306 252h12v6H306zM324 252h6v6H324zM306 258h18v6H306zM330 258h6v6H330zM342 258h6v6H342zM300 264h6v6H300zM318 264h12v6H318zM336 264h6v6H336zM348 264h6v6H348zM300 270h12v6H300zM324 270h6v6H324zM342 270h6v6H342zM360 270h6v6H360zM306 276h18v6H306zM330 276h6v6H330zM342 276h6v6H342zM354 276h6v6H354zM312 282h18v6H312zM336 282h6v6H336zM348 282h6v6H348zM324 288h6v6H324zM342 288h6v6H342zM330 294h6v6H330zM342 294h6v6H342zM354 294h6v6H354zM336 300h6v6H336zM348 300h6v6H348zM330 306h6v6H330zM342 306h6v6H342zM336 312h6v6H336zM348 312h12v6H348zM342 318h6v6H342zM348 330h6v6H348z"/>
<path fill="#b43c28" d="M324 222h6v6H324zM240 228h6v6H240zM234 234h12v6H234zM228 240h18v6H228zM222 246h24v6H222zM222 252h24v6H222zM216 258h30v6H216zM216 264h30v6H216zM216 270h30v6H216zM270 270h12v6H270zM210 276h42v6H210zM210 282h24v6H210zM240 282h6v6H240zM300 282h6v6H300zM210 288h18v6H210zM234 288h6v6H234zM216 294h12v6H216zM198 300h24v6H198zM204 306h24v6H204zM204 318h18v6H204zM198 324h12v6H198zM192 330h6v6H192zM204 336h6v6H204zM192 384h6v6H192zM204 384h6v6H204zM204 390h6v6H204zM192 396h6v6H192zM192 408h12v6H192zM198 420h6v6H198zM192 438h6v6H192zM210 450h6v6H210zM204 456h6v6H204zM216 474h6v6H216zM216 498h6v6H216zM222 504h6v6H222zM210 510h6v6H210zM222 510h6v6H222zM216 516h6v6H216zM222 522h6v6H222zM348 522h6v6H348zM222 528h18v6H222zM228 534h12v6H228zM342 534h6v6H342zM228 540h18v6H228zM228 546h24v6H228zM342 546h6v6H342zM240 552h18v6H240zM348 552h6v6H348zM240 558h24v6H240zM336 558h12v6H336zM240 564h24v6H240zM270 564h6v6H270zM282 564h6v6H282zM312 564h6v6H312zM324 564h18v6H324zM348 564h12v6H348zM240 570h24v6H240zM270 570h24v6H270zM306 570h24v6H306zM342 570h12v6H342zM246 576h18v6H246zM270 576h72v6H270zM252 582h12v6H252zM270 582h66v6H270zM348 582h6v6H348zM258 588h6v6H258zM270 588h54v6H270zM336 588h12v6H336zM354 588h6v6H354zM270 594h42v6H270zM324 594h18v6H324zM348 594h6v6H348zM360 594h6v6H360zM270 600h24v6H270zM306 600h24v6H306zM342 600h6v6H342zM276 606h48v6H276zM336 606h6v6H336zM282 612h30v6H282zM324 612h12v6H324zM312 618h12v6H312zM336 618h6v6H336zM348 618h6v6H348zM306 624h6v6H306zM330 624h6v6H330z"/>
<path fill="#f0c8b4" d="M336 222h6v6H336zM396 582h6v6H396zM366 612h6v6H366zM348 624h6v6H348zM324 630h6v6H324z"/>
<path fill="#c88c8c" d="M396 222h6v6H396zM474 228h6v6H474zM348 234h6v6H348zM480 234h6v6H480zM486 240h6v6H486zM504 288h6v6H504zM480 318h6v6H480zM456 324h6v6H456zM186 360h6v6H186zM186 366h6v6H186zM186 402h6v6H186zM198 480h6v6H198zM522 546h6v6H522zM510 552h6v6H510z"/>
<path fill="#78c8c8" d="M468 222h6v6H468z"/>
<path fill="#b4dcdc" d="M474 222h6v6H474zM432 330h6v6H432zM564 378h6v6H564zM564 396h6v6H564zM564 402h6v6H564zM456 486h6v6H456z"/>
<path fill="#c878a0" d="M480 222h6v6H480zM528 540h6v6H528zM528 546h6v6H528zM522 552h6v6H522zM516 558h6v6H516z"/>
<path fill="#c8648c" d="M486 222h12v6H486zM480 228h24v6H480zM510 228h6v6H510zM492 234h18v6H492zM504 240h12v6H504zM540 240h6v6H540zM510 246h12v6H510zM516 252h18v6H516zM522 258h6v6H522zM564 258h6v6H564zM522 264h18v6H522zM528 270h18v6H528zM552 270h6v6H552zM540 288h12v6H540zM540 294h12v6H540zM558 294h6v6H558zM540 306h18v6H540zM552 522h6v6H552zM546 528h6v6H546zM558 528h6v6H558zM546 534h12v6H546zM540 540h12v6H540zM534 546h12v6H534zM558 546h18v6H558zM528 552h24v6H528zM528 558h6v6H528zM540 558h6v6H540zM552 558h6v6H552z"/>
<path fill="#c8508c" d="M498 222h18v6H498zM504 228h6v6H504zM516 228h6v6H516zM528 228h6v6H528zM510 234h6v6H510zM522 234h6v6H522zM534 234h6v6H534zM522 240h6v6H522zM534 240h6v6H534zM528 246h6v6H528zM546 246h6v6H546zM552 252h6v6H552zM540 258h6v6H540zM558 258h6v6H558zM546 264h6v6H546zM558 270h6v6H558zM540 276h12v6H540zM564 276h12v6H564zM552 282h12v6H552zM576 282h6v6H576zM552 294h6v6H552zM564 300h6v6H564zM564 528h6v6H564zM558 534h12v6H558zM552 540h12v6H552zM570 540h6v6H570zM552 546h6v6H552zM552 552h6v6H552zM534 558h6v6H534zM546 558h6v6H546z"/>
<path fill="#c85078" d="M516 222h12v6H516zM516 234h6v6H516zM540 246h6v6H540zM534 252h6v6H534zM468 258h6v6H468zM552 264h6v6H552zM564 264h6v6H564zM582 282h6v6H582zM564 288h12v6H564zM558 300h6v6H558zM570 300h6v6H570zM570 528h6v6H570zM576 534h6v6H576zM546 546h6v6H546z"/>
<path fill="#78dcdc" d="M546 222h6v6H546zM432 408h6v6H432zM438 438h6v6H438zM552 570h6v6H552z"/>
<path fill="#dcb4b4" d="M342 228h6v6H342zM204 270h6v6H204zM186 348h6v6H186zM204 504h6v6H204z"/>
<path fill="#dcb4a0" d="M384 228h6v6H384zM366 234h6v6H366zM210 258h6v6H210zM198 288h6v6H198zM186 414h6v6H186zM282 618h6v6H282z"/>
<path fill="#c85064" d="M420 228h6v6H420zM432 234h6v6H432zM426 240h6v6H426zM438 240h6v6H438zM468 282h6v6H468zM480 312h6v6H480zM414 318h12v6H414zM414 354h6v6H414zM414 360h6v6H414zM552 516h6v6H552zM582 534h6v6H582z"/>
<path fill="#c88c78" d="M468 228h6v6H468zM474 234h6v6H474zM222 240h6v6H222zM384 240h12v6H384zM390 246h6v6H390zM402 246h6v6H402zM492 252h6v6H492zM408 258h6v6H408zM420 258h6v6H420zM498 258h6v6H498zM420 264h12v6H420zM504 264h6v6H504zM426 270h12v6H426zM420 276h6v6H420zM432 276h6v6H432zM510 276h6v6H510zM426 282h6v6H426zM438 282h6v6H438zM438 288h12v6H438zM390 294h6v6H390zM438 294h6v6H438zM438 300h6v6H438zM492 300h6v6H492zM450 312h6v6H450zM186 396h6v6H186zM336 492h6v6H336zM342 504h6v6H342z"/>
<path fill="#c86478" d="M522 228h6v6H522zM444 234h6v6H444zM528 234h6v6H528zM450 240h6v6H450zM462 240h6v6H462zM516 240h6v6H516zM528 240h6v6H528zM456 246h6v6H456zM468 246h6v6H468zM522 246h6v6H522zM462 252h6v6H462zM546 252h6v6H546zM384 258h6v6H384zM438 258h6v6H438zM534 258h6v6H534zM546 258h6v6H546zM390 264h6v6H390zM444 264h6v6H444zM450 270h6v6H450zM468 270h6v6H468zM486 270h6v6H486zM456 276h6v6H456zM498 276h6v6H498zM486 282h6v6H486zM456 288h6v6H456zM468 294h6v6H468zM486 294h6v6H486zM474 300h6v6H474zM414 366h6v6H414zM414 372h6v6H414zM414 378h6v6H414zM414 384h6v6H414zM414 390h6v6H414zM414 396h6v6H414zM414 414h6v6H414zM414 420h12v6H414zM420 426h6v6H420zM198 438h6v6H198zM420 438h12v6H420zM426 444h6v6H426zM426 450h6v6H426zM426 456h6v6H426zM426 462h12v6H426zM432 468h6v6H432zM432 474h6v6H432zM438 480h6v6H438zM438 486h6v6H438zM438 492h12v6H438zM444 498h6v6H444zM450 504h6v6H450zM456 516h6v6H456zM546 516h6v6H546zM558 552h6v6H558z"/>
<path fill="#dc6478" d="M534 228h6v6H534zM540 234h6v6H540zM546 240h6v6H546zM534 246h6v6H534zM552 246h6v6H552zM540 252h6v6H540zM558 252h6v6H558zM552 258h6v6H552zM540 264h6v6H540zM558 264h6v6H558zM546 270h6v6H546zM564 270h12v6H564zM552 276h12v6H552zM540 282h6v6H540zM564 282h6v6H564zM552 288h6v6H552zM576 288h6v6H576zM564 294h6v6H564zM546 300h12v6H546zM558 306h6v6H558zM558 522h6v6H558zM552 528h6v6H552zM570 534h6v6H570zM564 540h6v6H564z"/>
<path fill="#788ca0" d="M540 228h6v6H540zM420 366h6v6H420zM456 510h6v6H456zM534 564h12v6H534z"/>
<path fill="#28b4c8" d="M546 228h6v6H546zM426 348h6v6H426zM540 570h6v6H540z"/>
<path fill="#64b4dc" d="M552 228h6v6H552z"/>
<path fill="#b45050" d="M228 234h6v6H228zM216 252h6v6H216zM192 324h6v6H192zM348 360h6v6H348zM192 444h6v6H192zM234 564h6v6H234z"/>
<path fill="#8c64a0" d="M354 234h6v6H354z"/>
<path fill="#dca08c" d="M360 234h6v6H360zM498 252h6v6H498zM504 258h6v6H504zM186 408h6v6H186zM210 438h6v6H210zM210 444h6v6H210zM222 546h6v6H222z"/>
<path fill="#c87850" d="M450 234h6v6H450zM456 240h6v6H456zM462 258h6v6H462zM480 258h6v6H480zM474 270h6v6H474zM258 276h18v6H258zM372 276h12v6H372zM492 276h6v6H492zM252 282h24v6H252zM288 282h12v6H288zM378 282h6v6H378zM474 282h6v6H474zM240 288h6v6H240zM252 288h30v6H252zM288 288h18v6H288zM384 288h6v6H384zM234 294h6v6H234zM252 294h18v6H252zM276 294h18v6H276zM300 294h12v6H300zM474 294h12v6H474zM246 300h6v6H246zM258 300h42v6H258zM306 300h12v6H306zM252 306h6v6H252zM264 306h18v6H264zM288 306h18v6H288zM312 306h12v6H312zM246 312h66v6H246zM318 312h6v6H318zM240 318h6v6H240zM252 318h6v6H252zM264 318h6v6H264zM276 318h12v6H276zM294 318h24v6H294zM324 318h6v6H324zM390 318h6v6H390zM252 324h42v6H252zM300 324h36v6H300zM396 324h6v6H396zM246 330h6v6H246zM258 330h24v6H258zM288 330h12v6H288zM306 330h30v6H306zM246 336h42v6H246zM294 336h6v6H294zM306 336h30v6H306zM240 342h6v6H240zM252 342h36v6H252zM294 342h12v6H294zM312 342h24v6H312zM234 348h12v6H234zM252 348h42v6H252zM300 348h6v6H300zM318 348h18v6H318zM234 354h6v6H234zM246 354h48v6H246zM300 354h36v6H300zM228 360h12v6H228zM246 360h24v6H246zM276 360h6v6H276zM288 360h6v6H288zM300 360h36v6H300zM228 366h6v6H228zM246 366h36v6H246zM288 366h48v6H288zM246 372h36v6H246zM288 372h12v6H288zM306 372h30v6H306zM222 378h12v6H222zM246 378h6v6H246zM276 378h6v6H276zM288 378h6v6H288zM300 378h6v6H300zM312 378h12v6H312zM210 384h24v6H210zM246 384h12v6H246zM288 384h6v6H288zM300 384h6v6H300zM312 384h12v6H312zM210 390h30v6H210zM252 390h6v6H252zM276 390h6v6H276zM318 390h6v6H318zM210 396h30v6H210zM252 396h6v6H252zM276 396h12v6H276zM294 396h6v6H294zM324 396h6v6H324zM222 402h18v6H222zM252 402h18v6H252zM276 402h12v6H276zM228 408h12v6H228zM252 408h12v6H252zM270 408h18v6H270zM330 408h6v6H330zM210 414h12v6H210zM234 414h24v6H234zM270 414h12v6H270zM210 420h12v6H210zM234 420h6v6H234zM300 420h36v6H300zM252 426h12v6H252zM288 426h6v6H288zM300 426h6v6H300zM312 426h18v6H312zM222 432h12v6H222zM240 432h24v6H240zM294 432h6v6H294zM306 432h18v6H306zM330 432h6v6H330zM216 438h18v6H216zM252 438h6v6H252zM264 438h6v6H264zM276 438h24v6H276zM306 438h6v6H306zM324 438h6v6H324zM216 444h24v6H216zM246 444h18v6H246zM282 444h12v6H282zM300 444h6v6H300zM312 444h6v6H312zM222 450h48v6H222zM276 450h42v6H276zM324 450h6v6H324zM228 456h36v6H228zM270 456h6v6H270zM282 456h30v6H282zM318 456h18v6H318zM216 462h6v6H216zM228 462h42v6H228zM276 462h18v6H276zM300 462h6v6H300zM312 462h6v6H312zM324 462h12v6H324zM222 468h6v6H222zM234 468h12v6H234zM252 468h18v6H252zM282 468h18v6H282zM306 468h6v6H306zM318 468h18v6H318zM222 474h6v6H222zM234 474h36v6H234zM282 474h6v6H282zM300 474h6v6H300zM312 474h24v6H312zM222 480h6v6H222zM234 480h30v6H234zM294 480h6v6H294zM306 480h6v6H306zM318 480h6v6H318zM228 486h6v6H228zM240 486h6v6H240zM252 486h18v6H252zM294 486h12v6H294zM312 486h6v6H312zM324 486h6v6H324zM336 486h6v6H336zM228 492h6v6H228zM240 492h24v6H240zM270 492h6v6H270zM294 492h6v6H294zM306 492h6v6H306zM318 492h6v6H318zM330 492h6v6H330zM234 498h24v6H234zM264 498h18v6H264zM294 498h30v6H294zM414 498h6v6H414zM234 504h6v6H234zM246 504h30v6H246zM294 504h42v6H294zM234 510h42v6H234zM306 510h6v6H306zM318 510h6v6H318zM330 510h6v6H330zM342 510h12v6H342zM420 510h6v6H420zM240 516h36v6H240zM312 516h24v6H312zM342 516h6v6H342zM420 516h6v6H420zM246 522h24v6H246zM276 522h12v6H276zM312 522h6v6H312zM324 522h6v6H324zM336 522h6v6H336zM246 528h30v6H246zM306 528h12v6H306zM324 528h6v6H324zM336 528h6v6H336zM456 528h6v6H456zM252 534h36v6H252zM324 534h6v6H324zM336 534h6v6H336zM474 534h6v6H474zM258 540h36v6H258zM318 540h6v6H318zM426 540h6v6H426zM444 540h6v6H444zM468 540h18v6H468zM264 546h18v6H264zM288 546h6v6H288zM402 546h6v6H402zM414 546h6v6H414zM432 546h12v6H432zM468 546h24v6H468zM270 552h30v6H270zM408 552h6v6H408zM426 552h6v6H426zM462 552h6v6H462zM480 552h6v6H480zM492 552h6v6H492zM276 558h30v6H276zM408 558h6v6H408zM462 558h6v6H462zM474 558h6v6H474zM486 558h12v6H486zM390 564h6v6H390zM456 564h6v6H456zM468 564h12v6H468zM486 564h6v6H486zM390 570h6v6H390zM450 570h6v6H450zM468 570h6v6H468zM480 570h6v6H480zM456 576h12v6H456z"/>
<path fill="#dc78a0" d="M486 234h6v6H486zM504 246h6v6H504zM510 252h6v6H510zM516 258h6v6H516zM516 264h6v6H516zM522 270h6v6H522zM528 276h6v6H528zM528 282h6v6H528zM534 288h6v6H534zM534 294h6v6H534zM540 528h6v6H540zM534 534h6v6H534z"/>
<path fill="#a078a0" d="M546 234h6v6H546zM552 240h6v6H552z"/>
<path fill="#64c8dc" d="M558 234h6v6H558zM444 462h6v6H444zM564 564h6v6H564z"/>
<path fill="#dc8c64" d="M474 240h6v6H474zM486 246h6v6H486zM366 258h6v6H366zM504 270h6v6H504zM516 282h6v6H516zM390 288h6v6H390zM426 288h6v6H426zM444 294h6v6H444zM396 306h6v6H396zM438 306h6v6H438zM396 312h6v6H396zM456 312h6v6H456zM330 498h6v6H330zM444 558h6v6H444zM420 564h6v6H420zM492 570h6v6H492zM384 582h6v6H384zM462 582h6v6H462z"/>
<path fill="#dc8cb4" d="M492 240h6v6H492zM504 252h6v6H504z"/>
<path fill="#c864a0" d="M498 240h6v6H498zM546 522h6v6H546zM540 534h6v6H540zM534 540h6v6H534zM522 558h6v6H522z"/>
<path fill="#28b4dc" d="M558 240h6v6H558zM426 360h6v6H426z"/>
<path fill="#8cc8dc" d="M564 240h6v6H564zM474 522h6v6H474z"/>
<path fill="#a0283c" d="M264 246h6v6H264zM354 258h6v6H354zM264 264h6v6H264zM300 276h6v6H300zM324 300h6v6H324z"/>
<path fill="#c8a078" d="M396 246h6v6H396zM402 252h12v6H402zM414 258h6v6H414zM426 276h6v6H426zM258 384h6v6H258zM510 558h6v6H510z"/>
<path fill="#dc7850" d="M462 246h6v6H462zM480 246h6v6H480zM468 252h6v6H468zM402 264h6v6H402zM468 264h6v6H468zM486 264h12v6H486zM276 276h6v6H276zM396 276h6v6H396zM450 276h6v6H450zM468 276h6v6H468zM486 276h6v6H486zM276 282h6v6H276zM402 282h12v6H402zM456 282h6v6H456zM498 282h18v6H498zM282 288h6v6H282zM414 288h12v6H414zM468 288h6v6H468zM270 294h6v6H270zM402 294h6v6H402zM414 300h6v6H414zM462 300h6v6H462zM282 306h6v6H282zM474 306h6v6H474zM408 312h12v6H408zM258 318h6v6H258zM270 318h6v6H270zM468 318h12v6H468zM270 360h6v6H270zM294 378h6v6H294zM306 378h6v6H306zM294 384h6v6H294zM306 384h6v6H306zM246 390h6v6H246zM246 396h6v6H246zM246 402h6v6H246zM288 402h6v6H288zM246 408h6v6H246zM288 408h6v6H288zM258 414h6v6H258zM294 426h6v6H294zM306 426h6v6H306zM270 432h6v6H270zM300 432h6v6H300zM246 438h6v6H246zM300 438h6v6H300zM312 438h12v6H312zM270 444h6v6H270zM306 444h6v6H306zM318 444h6v6H318zM318 450h6v6H318zM312 456h6v6H312zM294 462h6v6H294zM318 462h6v6H318zM288 474h12v6H288zM306 474h6v6H306zM270 480h6v6H270zM288 480h6v6H288zM300 480h6v6H300zM324 480h6v6H324zM288 486h6v6H288zM306 486h6v6H306zM330 486h6v6H330zM300 492h6v6H300zM312 492h6v6H312zM324 492h6v6H324zM258 498h6v6H258zM324 498h6v6H324zM276 504h6v6H276zM312 510h6v6H312zM324 510h6v6H324zM336 510h6v6H336zM276 516h6v6H276zM270 522h6v6H270zM288 522h6v6H288zM318 522h6v6H318zM330 522h6v6H330zM342 522h6v6H342zM276 528h12v6H276zM318 528h6v6H318zM330 528h6v6H330zM288 534h6v6H288zM330 534h6v6H330zM324 540h12v6H324zM360 540h6v6H360zM282 546h6v6H282zM294 546h6v6H294zM366 546h6v6H366zM414 552h6v6H414zM468 552h6v6H468zM366 558h12v6H366zM402 564h6v6H402zM462 564h6v6H462zM444 576h6v6H444zM378 588h6v6H378z"/>
<path fill="#dca078" d="M492 246h6v6H492zM414 264h6v6H414zM420 270h6v6H420zM432 282h6v6H432zM276 432h6v6H276zM378 594h6v6H378z"/>
<path fill="#dc8ca0" d="M498 246h6v6H498zM510 258h6v6H510zM516 270h6v6H516zM522 276h6v6H522zM528 288h6v6H528z"/>
<path fill="#64a0b4" d="M564 252h6v6H564zM546 564h6v6H546z"/>
<path fill="#3ca0c8" d="M570 252h6v6H570zM438 450h6v6H438zM576 552h6v6H576z"/>
<path fill="#c8503c" d="M360 258h6v6H360zM420 312h6v6H420zM216 324h6v6H216zM408 324h6v6H408zM210 348h6v6H210zM396 402h6v6H396zM360 408h6v6H360zM384 408h6v6H384zM264 420h6v6H264zM420 546h6v6H420zM360 588h6v6H360zM366 606h6v6H366z"/>
<path fill="#dc648c" d="M528 258h6v6H528zM534 276h6v6H534zM534 282h6v6H534zM546 282h6v6H546zM558 288h6v6H558z"/>
<path fill="#a0788c" d="M570 264h6v6H570z"/>
<path fill="#b4dcf0" d="M582 264h6v6H582zM528 378h12v6H528zM528 384h6v6H528z"/>
<path fill="#a01414" d="M252 270h6v6H252zM288 270h6v6H288zM222 498h6v6H222z"/>
<path fill="#a0503c" d="M264 270h6v6H264zM264 558h6v6H264z"/>
<path fill="#c83c3c" d="M366 270h6v6H366zM498 288h6v6H498zM564 306h6v6H564zM408 402h6v6H408z"/>
<path fill="#dc783c" d="M372 270h6v6H372zM294 420h6v6H294z"/>
<path fill="#dc7864" d="M498 270h6v6H498zM396 294h6v6H396zM462 312h6v6H462z"/>
<path fill="#dc8c78" d="M510 270h6v6H510zM522 288h6v6H522zM444 306h6v6H444z"/>
<path fill="#50a0b4" d="M576 270h6v6H576z"/>
<path fill="#648cc8" d="M582 270h6v6H582z"/>
<path fill="#c8643c" d="M252 276h6v6H252zM288 276h6v6H288zM228 300h6v6H228zM228 306h18v6H228zM222 312h6v6H222zM324 312h6v6H324zM222 318h6v6H222zM288 318h6v6H288zM216 330h6v6H216zM234 330h6v6H234zM216 336h6v6H216zM234 336h6v6H234zM228 342h6v6H228zM216 348h6v6H216zM306 348h6v6H306zM210 354h6v6H210zM240 354h6v6H240zM210 360h6v6H210zM210 366h18v6H210zM240 366h6v6H240zM216 372h12v6H216zM234 372h12v6H234zM216 378h6v6H216zM288 414h6v6H288zM246 426h6v6H246zM210 432h6v6H210zM216 468h6v6H216zM222 486h6v6H222zM240 522h6v6H240zM342 528h6v6H342zM252 540h6v6H252zM258 546h6v6H258zM288 564h18v6H288zM360 612h6v6H360z"/>
<path fill="#dc8c50" d="M282 276h6v6H282zM282 282h6v6H282zM450 294h6v6H450zM270 390h6v6H270zM258 396h6v6H258zM270 396h6v6H270zM288 396h6v6H288zM270 402h6v6H270zM300 402h6v6H300zM300 408h6v6H300zM312 408h6v6H312zM270 426h6v6H270zM288 432h6v6H288zM324 432h6v6H324zM258 438h6v6H258zM270 438h6v6H270zM276 444h6v6H276zM294 444h6v6H294zM324 444h6v6H324zM270 450h6v6H270zM276 456h6v6H276zM270 462h6v6H270zM306 462h6v6H306zM270 468h12v6H270zM300 468h6v6H300zM312 468h6v6H312zM270 474h12v6H270zM276 480h12v6H276zM312 480h6v6H312zM330 480h18v6H330zM270 486h18v6H270zM318 486h6v6H318zM342 486h6v6H342zM276 492h18v6H276zM282 498h12v6H282zM348 498h6v6H348zM282 504h12v6H282zM348 504h6v6H348zM276 510h30v6H276zM282 516h30v6H282zM336 516h6v6H336zM360 516h6v6H360zM294 522h18v6H294zM360 522h6v6H360zM288 528h18v6H288zM360 528h12v6H360zM462 528h6v6H462zM294 534h30v6H294zM360 534h12v6H360zM462 534h12v6H462zM294 540h24v6H294zM366 540h12v6H366zM456 540h12v6H456zM306 546h24v6H306zM360 546h6v6H360zM372 546h12v6H372zM408 546h6v6H408zM456 546h12v6H456zM300 552h24v6H300zM360 552h30v6H360zM402 552h6v6H402zM420 552h6v6H420zM432 552h6v6H432zM450 552h12v6H450zM474 552h6v6H474zM306 558h12v6H306zM360 558h6v6H360zM378 558h18v6H378zM402 558h6v6H402zM414 558h18v6H414zM450 558h12v6H450zM468 558h6v6H468zM480 558h6v6H480zM498 558h12v6H498zM360 564h30v6H360zM396 564h6v6H396zM408 564h12v6H408zM438 564h18v6H438zM480 564h6v6H480zM492 564h12v6H492zM360 570h18v6H360zM384 570h6v6H384zM396 570h18v6H396zM432 570h12v6H432zM456 570h12v6H456zM474 570h6v6H474zM486 570h6v6H486zM366 576h6v6H366zM390 576h12v6H390zM432 576h12v6H432zM450 576h6v6H450zM468 576h18v6H468zM456 582h6v6H456zM366 588h12v6H366zM366 594h12v6H366zM372 600h6v6H372z"/>
<path fill="#b46478" d="M576 276h6v6H576zM420 324h6v6H420zM420 396h6v6H420z"/>
<path fill="#dcc8dc" d="M588 276h6v6H588z"/>
<path fill="#dc6464" d="M570 282h6v6H570zM570 294h6v6H570z"/>
<path fill="#dc788c" d="M588 282h6v6H588zM528 294h6v6H528zM534 300h12v6H534zM420 414h6v6H420z"/>
<path fill="#dca064" d="M432 288h6v6H432zM444 300h6v6H444zM456 534h6v6H456zM450 540h6v6H450zM444 546h12v6H444zM444 552h6v6H444zM396 558h6v6H396zM438 558h6v6H438zM426 564h12v6H426zM414 570h18v6H414zM402 576h6v6H402zM426 576h6v6H426zM444 582h12v6H444zM468 582h6v6H468z"/>
<path fill="#dc6450" d="M486 288h6v6H486z"/>
<path fill="#c8c8c8" d="M510 288h6v6H510zM570 306h6v6H570zM486 312h6v6H486zM546 318h6v6H546zM462 330h12v6H462zM582 384h6v6H582zM486 390h6v6H486zM498 396h6v6H498zM438 402h6v6H438zM498 402h6v6H498zM552 510h6v6H552zM522 564h6v6H522z"/>
<path fill="#c8a0a0" d="M516 288h6v6H516zM534 306h6v6H534zM540 312h6v6H540zM552 318h6v6H552zM504 390h12v6H504zM522 390h6v6H522zM444 396h42v6H444zM498 408h12v6H498zM534 528h6v6H534zM504 552h6v6H504z"/>
<path fill="#a03c28" d="M228 294h6v6H228zM324 306h6v6H324zM210 336h6v6H210zM228 510h6v6H228zM258 552h6v6H258zM330 552h6v6H330zM324 558h6v6H324zM276 564h6v6H276z"/>
<path fill="#c8b4a0" d="M498 294h6v6H498zM480 528h6v6H480z"/>
<path fill="#c8b4b4" d="M522 294h6v6H522zM528 300h6v6H528zM438 312h6v6H438zM564 312h6v6H564zM528 390h6v6H528zM438 396h6v6H438zM486 396h12v6H486zM504 402h6v6H504zM486 534h6v6H486z"/>
<path fill="#c8dcdc" d="M582 294h6v6H582zM576 300h6v6H576zM492 306h6v6H492zM444 318h6v6H444zM558 318h6v6H558zM450 324h6v6H450zM582 378h6v6H582zM540 384h6v6H540zM552 384h6v6H552zM480 390h6v6H480zM540 390h6v6H540zM444 402h6v6H444zM510 402h6v6H510zM510 408h6v6H510zM558 510h6v6H558zM540 516h6v6H540zM534 522h6v6H534zM582 528h6v6H582zM492 540h6v6H492zM522 540h6v6H522zM498 546h6v6H498zM516 546h6v6H516z"/>
<path fill="#b45028" d="M318 300h6v6H318zM330 318h6v6H330zM222 492h6v6H222zM270 558h6v6H270z"/>
<path fill="#3ca0a0" d="M426 306h6v6H426zM432 444h6v6H432z"/>
<path fill="#7878a0" d="M432 306h6v6H432zM420 372h6v6H420zM432 450h6v6H432zM444 486h6v6H444z"/>
<path fill="#28b4b4" d="M426 312h6v6H426zM438 462h6v6H438zM462 516h6v6H462z"/>
<path fill="#8ca0c8" d="M432 312h6v6H432z"/>
<path fill="#dc5064" d="M546 312h6v6H546zM564 522h6v6H564z"/>
<path fill="#8cdcdc" d="M432 318h6v6H432zM444 456h6v6H444zM450 474h6v6H450zM516 564h6v6H516z"/>
<path fill="#b43c50" d="M354 324h6v6H354z"/>
<path fill="#a0dcdc" d="M432 324h6v6H432zM432 390h6v6H432zM438 432h6v6H438zM468 510h6v6H468z"/>
<path fill="#782864" d="M354 330h6v6H354z"/>
<path fill="#a0648c" d="M420 330h6v6H420zM420 390h6v6H420zM426 432h6v6H426z"/>
<path fill="#288cc8" d="M426 330h6v6H426z"/>
<path fill="#8c3c64" d="M354 336h6v6H354zM354 342h6v6H354z"/>
<path fill="#8c788c" d="M420 336h6v6H420zM420 384h6v6H420z"/>
<path fill="#78788c" d="M420 342h6v6H420zM420 348h6v6H420zM420 378h6v6H420zM426 426h6v6H426z"/>
<path fill="#14c8dc" d="M426 342h6v6H426zM426 390h6v6H426zM456 498h6v6H456z"/>
<path fill="#78b478" d="M168 348h6v6H168z"/>
<path fill="#64a064" d="M174 348h6v6H174zM180 354h6v6H180z"/>
<path fill="#8c3c78" d="M354 348h6v6H354zM354 354h6v6H354zM354 360h6v6H354zM354 366h6v6H354zM354 378h6v6H354zM354 384h6v6H354zM354 390h6v6H354zM354 396h6v6H354zM354 420h6v6H354zM354 438h6v6H354zM354 450h6v6H354z"/>
<path fill="#287828" d="M168 354h6v6H168z"/>
<path fill="#006400" d="M174 354h6v6H174z"/>
<path fill="#b48c78" d="M186 354h6v6H186zM396 432h6v6H396z"/>
<path fill="#a02814" d="M204 354h6v6H204z"/>
<path fill="#788c8c" d="M420 354h6v6H420z"/>
<path fill="#3c8cc8" d="M426 354h6v6H426zM426 378h6v6H426zM432 426h6v6H432zM444 468h6v6H444zM450 486h6v6H450z"/>
<path fill="#c8dcc8" d="M174 360h6v6H174zM162 366h18v6H162zM162 372h6v6H162z"/>
<path fill="#648ca0" d="M420 360h6v6H420zM426 420h6v6H426zM438 468h6v6H438zM450 498h6v6H450z"/>
<path fill="#28dcdc" d="M426 366h6v6H426z"/>
<path fill="#f0b4b4" d="M594 366h6v6H594zM588 378h6v6H588zM420 408h6v6H420z"/>
<path fill="#c8783c" d="M228 372h6v6H228zM252 378h12v6H252zM270 378h6v6H270zM306 390h12v6H306zM240 396h6v6H240zM240 402h6v6H240zM318 402h6v6H318zM222 420h6v6H222zM216 432h6v6H216zM228 498h6v6H228zM348 516h6v6H348zM330 546h6v6H330zM324 552h6v6H324zM318 558h6v6H318zM384 576h6v6H384zM360 582h6v6H360zM366 600h6v6H366z"/>
<path fill="#8c5078" d="M354 372h6v6H354zM354 402h6v6H354zM354 414h6v6H354zM354 426h6v6H354zM354 462h6v6H354zM354 468h6v6H354zM354 480h6v6H354zM354 486h6v6H354zM354 528h6v6H354z"/>
<path fill="#78783c" d="M264 378h6v6H264zM330 402h6v6H330zM408 426h6v6H408z"/>
<path fill="#c88c50" d="M324 378h6v6H324zM324 384h6v6H324zM324 390h6v6H324zM264 408h6v6H264zM318 408h12v6H318zM264 414h6v6H264zM264 426h6v6H264zM330 426h6v6H330zM264 432h6v6H264zM330 438h6v6H330zM264 444h6v6H264zM330 444h12v6H330zM330 450h12v6H330zM264 456h6v6H264zM336 456h6v6H336zM336 462h6v6H336zM336 468h12v6H336zM336 474h12v6H336zM264 480h6v6H264zM348 486h6v6H348zM264 492h6v6H264zM360 510h6v6H360zM366 522h6v6H366zM300 546h6v6H300zM486 552h6v6H486zM444 570h6v6H444z"/>
<path fill="#f03c3c" d="M594 378h6v6H594z"/>
<path fill="#f06464" d="M600 378h6v6H600z"/>
<path fill="#f0a0a0" d="M606 378h6v6H606zM282 426h6v6H282z"/>
<path fill="#648c50" d="M264 384h6v6H264z"/>
<path fill="#787828" d="M270 384h6v6H270zM288 390h6v6H288z"/>
<path fill="#8c7828" d="M276 384h6v6H276zM294 390h6v6H294z"/>
<path fill="#a0643c" d="M282 384h6v6H282zM282 390h6v6H282zM300 390h6v6H300z"/>
<path fill="#14b4c8" d="M426 384h6v6H426zM432 438h6v6H432zM444 474h6v6H444zM456 504h6v6H456z"/>
<path fill="#a0c8dc" d="M534 384h6v6H534z"/>
<path fill="#b4b4b4" d="M546 384h6v6H546zM558 384h6v6H558zM570 384h6v6H570zM570 396h12v6H570z"/>
<path fill="#a06464" d="M564 384h6v6H564z"/>
<path fill="#b4c8c8" d="M576 384h6v6H576zM534 390h6v6H534zM570 402h12v6H570z"/>
<path fill="#f07878" d="M594 384h6v6H594z"/>
<path fill="#b4b48c" d="M258 390h12v6H258zM390 426h6v6H390z"/>
<path fill="#788cdc" d="M516 390h6v6H516z"/>
<path fill="#b4783c" d="M300 396h6v6H300z"/>
<path fill="#508c50" d="M306 396h6v6H306z"/>
<path fill="#647828" d="M312 396h6v6H312z"/>
<path fill="#8c783c" d="M318 396h6v6H318zM324 402h6v6H324z"/>
<path fill="#3c8cb4" d="M426 396h6v6H426z"/>
<path fill="#a0c8c8" d="M432 396h6v6H432z"/>
<path fill="#b4c8b4" d="M306 402h6v6H306z"/>
<path fill="#8c643c" d="M336 402h6v6H336zM360 414h6v6H360zM372 414h6v6H372z"/>
<path fill="#dc3c3c" d="M402 402h6v6H402zM366 408h18v6H366z"/>
<path fill="#dc3c50" d="M414 402h6v6H414z"/>
<path fill="#dc5050" d="M420 402h6v6H420zM336 414h6v6H336z"/>
<path fill="#a05064" d="M426 402h6v6H426z"/>
<path fill="#b478a0" d="M432 402h6v6H432z"/>
<path fill="#b4a078" d="M306 408h6v6H306z"/>
<path fill="#8c5028" d="M342 408h6v6H342z"/>
<path fill="#8c3c28" d="M348 408h6v6H348z"/>
<path fill="#643c50" d="M354 408h6v6H354z"/>
<path fill="#3cc8c8" d="M426 408h6v6H426zM570 552h6v6H570zM546 570h6v6H546z"/>
<path fill="#dc503c" d="M282 414h6v6H282zM294 414h6v6H294zM330 414h6v6H330zM246 420h6v6H246zM276 420h18v6H276z"/>
<path fill="#dc5028" d="M300 414h6v6H300zM312 414h18v6H312zM252 420h12v6H252zM270 420h6v6H270z"/>
<path fill="#dc3c28" d="M306 414h6v6H306zM216 426h24v6H216z"/>
<path fill="#78643c" d="M366 414h6v6H366zM384 420h12v6H384zM402 426h6v6H402z"/>
<path fill="#b47850" d="M378 414h6v6H378z"/>
<path fill="#3ca0b4" d="M426 414h6v6H426z"/>
<path fill="#50dcdc" d="M432 414h6v6H432zM450 480h6v6H450z"/>
<path fill="#dc643c" d="M240 420h6v6H240zM240 426h6v6H240z"/>
<path fill="#a06450" d="M378 420h6v6H378zM414 426h6v6H414z"/>
<path fill="#786428" d="M396 420h6v6H396z"/>
<path fill="#b47864" d="M402 420h6v6H402zM348 492h6v6H348z"/>
<path fill="#b41414" d="M198 426h12v6H198z"/>
<path fill="#dc1414" d="M210 426h6v6H210z"/>
<path fill="#f0a08c" d="M276 426h6v6H276zM282 432h6v6H282z"/>
<path fill="#8ca064" d="M396 426h6v6H396z"/>
<path fill="#8c508c" d="M354 432h6v6H354zM354 444h6v6H354zM354 456h6v6H354zM354 474h6v6H354z"/>
<path fill="#c8a08c" d="M384 432h6v6H384zM342 492h6v6H342z"/>
<path fill="#c8c8b4" d="M390 432h6v6H390z"/>
<path fill="#b46464" d="M414 432h12v6H414z"/>
<path fill="#dc7878" d="M198 444h6v6H198z"/>
<path fill="#f0b4a0" d="M204 444h6v6H204z"/>
<path fill="#64a0dc" d="M438 444h6v6H438z"/>
<path fill="#b46450" d="M198 474h6v6H198zM264 552h6v6H264zM300 624h6v6H300z"/>
<path fill="#28a0b4" d="M444 480h6v6H444zM450 492h6v6H450z"/>
<path fill="#3c28a0" d="M354 492h6v6H354z"/>
<path fill="#78b4dc" d="M456 492h6v6H456zM462 504h6v6H462z"/>
<path fill="#b4b4dc" d="M336 498h6v6H336zM354 624h6v6H354z"/>
<path fill="#b4a0c8" d="M342 498h6v6H342z"/>
<path fill="#8c6478" d="M354 498h6v6H354zM354 504h6v6H354zM354 510h6v6H354zM354 516h6v6H354zM354 522h6v6H354z"/>
<path fill="#3cdcdc" d="M468 516h6v6H468z"/>
<path fill="#c83c64" d="M558 516h6v6H558z"/>
<path fill="#c88ca0" d="M564 516h6v6H564z"/>
<path fill="#a07878" d="M462 522h6v6H462zM474 528h6v6H474z"/>
<path fill="#c8788c" d="M540 522h6v6H540z"/>
<path fill="#64a08c" d="M468 528h6v6H468z"/>
<path fill="#b4643c" d="M246 534h6v6H246zM336 540h6v6H336z"/>
<path fill="#8c5064" d="M354 534h6v6H354zM354 540h6v6H354z"/>
<path fill="#dca050" d="M372 534h6v6H372zM378 540h6v6H378zM384 546h6v6H384zM390 552h6v6H390zM378 570h6v6H378zM372 576h6v6H372z"/>
<path fill="#c8b4c8" d="M528 534h6v6H528z"/>
<path fill="#f0b4c8" d="M588 540h6v6H588z"/>
<path fill="#a05050" d="M354 546h6v6H354z"/>
<path fill="#28c8c8" d="M582 546h6v6H582zM570 558h6v6H570z"/>
<path fill="#dcb464" d="M438 552h6v6H438zM432 558h6v6H432z"/>
<path fill="#3cb4dc" d="M564 558h6v6H564z"/>
<path fill="#dcb478" d="M504 564h6v6H504zM486 576h6v6H486z"/>
<path fill="#64c8c8" d="M510 564h6v6H510z"/>
<path fill="#788cb4" d="M528 564h6v6H528z"/>
<path fill="#dcc88c" d="M498 570h6v6H498z"/>
<path fill="#64dcdc" d="M522 570h6v6H522z"/>
<path fill="#c88c3c" d="M360 576h6v6H360z"/>
<path fill="#dc8c3c" d="M378 576h6v6H378zM366 582h18v6H366z"/>
<path fill="#dcb48c" d="M408 576h6v6H408zM390 582h6v6H390zM474 582h6v6H474z"/>
<path fill="#dcc8a0" d="M438 582h6v6H438z"/>
<path fill="#dcc8c8" d="M264 606h6v6H264z"/>
<path fill="#f0c8a0" d="M372 606h6v6H372z"/>
<path fill="#5050dc" d="M354 654h6v6H354z"/>
<line x1="10.5" y1="112.0" x2="267.5" y2="190.0" stroke="#8a8a8a"/>
<line x1="10.5" y1="112.0" x2="423.5" y2="62.5" stroke="#8a8a8a"/>
<line x1="267.5" y1="190.0" x2="681.5" y2="141.0" stroke="#8a8a8a"/>
<line x1="423.5" y1="62.5" x2="681.5" y2="141.0" stroke="#8a8a8a"/>
<line x1="10.5" y1="112.0" x2="10.5" y2="683.0" stroke="#8a8a8a"/>
<line x1="267.5" y1="190.0" x2="268.0" y2="762.0" stroke="#8a8a8a"/>
<line x1="423.5" y1="62.5" x2="423.5" y2="634.0" stroke="#8a8a8a"/>
<line x1="681.5" y1="141.0" x2="681.5" y2="712.0" stroke="#8a8a8a"/>
<line x1="10.5" y1="683.0" x2="268.0" y2="762.0" stroke="#8a8a8a"/>
<line x1="10.5" y1="683.0" x2="423.5" y2="634.0" stroke="#8a8a8a"/>
<line x1="268.0" y1="762.0" x2="681.5" y2="712.0" stroke="#8a8a8a"/>
<line x1="423.5" y1="634.0" x2="681.5" y2="712.0" stroke="#8a8a8a"/>
<line x1="355.7" y1="151" x2="355.7" y2="724" stroke="#0000c0" stroke-width="2"/>
</svg><canvas id="c3d" width="691" height="825" style="position:absolute;left:0;top:0"></canvas></div>
<div class="pane" style="left:929px;width:347px"></div>
<div class="a" style="left:4px;top:946px;width:1272px;height:1px;background:#808080"></div>

<!-- left panel content -->
<div class="t" style="left:26px;top:103px;font-size:14px;font-weight:bold;color:#3a3a3a">Grafik</div>
<svg class="a" style="left:10px;top:103px" width="8" height="12"><path d="M1.5 1.5L6 5.5L1.5 9.5Z" fill="#808080"/></svg>
<div class="cb" style="left:210px"><svg width="14" height="14" style="position:absolute;left:0;top:0"><path d="M4.5 3.5L10.5 9.5M10.5 3.5L4.5 9.5" stroke="#000" stroke-width="1"/></svg></div>
<div class="t" style="left:255px;top:103px;font-size:14px;color:#333">Grafik 3D</div>
<svg class="a" style="left:240px;top:103px" width="8" height="12"><path d="M1.5 1.5L6 5.5L1.5 9.5Z" fill="#808080"/></svg>
<div class="cb" style="left:906px"><svg width="14" height="14" style="position:absolute;left:0;top:0"><path d="M4.5 3.5L10.5 9.5M10.5 3.5L4.5 9.5" stroke="#000" stroke-width="1"/></svg></div>
<div class="t" style="left:951px;top:103px;font-size:14px;color:#333">Grafik 2</div>
<svg class="a" style="left:936px;top:103px" width="8" height="12"><path d="M1.5 1.5L6 5.5L1.5 9.5Z" fill="#808080"/></svg>
<div class="cb" style="left:1258px"><svg width="14" height="14" style="position:absolute;left:0;top:0"><path d="M4.5 3.5L10.5 9.5M10.5 3.5L4.5 9.5" stroke="#000" stroke-width="1"/></svg></div>

<div class="t" style="left:9px;top:136px;font-size:24px;font-weight:bold;font-style:italic;color:#0000e6">Rotationsvolumen</div>
<div class="t" style="left:28px;top:164px;font-size:17px;font-weight:bold;font-style:italic;color:#0000e6">(Kurvenschichtung )</div>
<div class="t" style="left:24px;top:224px;font-size:17px;font-weight:bold;font-style:italic;color:#0099ff;letter-spacing:0.3px">1.Oberfläche :</div>
<div class="t" style="left:23px;top:275px;font-size:17px;font-weight:bold;font-style:italic;color:#ff3366;letter-spacing:0.3px">2.Gitternetz :</div>
<div class="t" style="left:61px;top:305px;font-size:13px;color:#339900">NN = 80</div>
<svg class="a" style="left:0;top:0" width="228" height="480">
 <rect x="171.5" y="227.5" width="11" height="11" fill="#fff" stroke="#404040"/><path d="M173.5 232.5L176 235.5L181 229.5" fill="none" stroke="#000" stroke-width="2"/>
 <line x1="57" y1="328.5" x2="160" y2="328.5" stroke="#339900" stroke-width="2"/>
 <circle cx="72.5" cy="328.5" r="3.5" fill="#339900" stroke="#1a4d00" stroke-width="1"/>
 <defs><linearGradient id="gb" x1="0" y1="0" x2="0" y2="1"><stop offset="0" stop-color="#b8f4ff"/><stop offset="1" stop-color="#5ccdf0"/></linearGradient></defs>
 <rect x="49.5" y="362.5" width="23" height="23" rx="3" fill="url(#gb)" stroke="#555" stroke-width="1"/>
 <text x="57" y="378" font-family="Liberation Sans" font-size="12" fill="#000">x</text>
 <rect x="95.5" y="401.5" width="11" height="11" fill="#fff" stroke="#404040"/>
 <rect x="96.5" y="426.5" width="11" height="11" fill="#fff" stroke="#404040"/><path d="M98.5 431.5L101 434.5L106 428.5" fill="none" stroke="#000" stroke-width="2"/>
 <rect x="96.5" y="452.5" width="11" height="11" fill="#fff" stroke="#404040"/><path d="M98.5 457.5L101 460.5L106 454.5" fill="none" stroke="#000" stroke-width="2"/>
</svg>
<div class="t" style="left:92px;top:366px;font-size:14px;font-weight:bold;font-style:italic;color:#0000ff">- Löschen</div>
<div class="t" style="left:112px;top:400px;font-size:14px;color:#4040ff">Färbung a/b</div>
<div class="t" style="left:113px;top:425px;font-size:14px;color:#ff3366">sichtbar u</div>
<div class="t" style="left:113px;top:452px;font-size:14px;color:#4040ff">sichtbar v</div>
<!-- right panel -->
<svg class="a" style="left:929px;top:121px" width="347" height="825" viewBox="929 121 347 825" font-family="Liberation Sans">
<path d="M973.7 444.3 L974.3 441.0 L974.9 437.7 L975.6 434.5 L976.2 431.4 L976.9 428.4 L977.5 425.5 L978.2 422.7 L978.8 420.1 L979.5 417.5 L980.1 415.1 L980.8 412.8 L981.4 410.7 L982.1 408.7 L982.7 406.8 L983.4 405.0 L984.0 403.4 L984.7 401.9 L985.3 400.6 L986.0 399.4 L986.6 398.3 L987.2 397.3 L987.9 396.5 L988.5 395.8 L989.2 395.2 L989.8 394.8 L990.5 394.4 L991.1 394.2 L991.8 394.1 L992.4 394.1 L993.1 394.2 L993.7 394.4 L994.4 394.7 L995.0 395.1 L995.7 395.5 L996.3 396.0 L997.0 396.6 L997.6 397.3 L998.3 398.1 L998.9 398.9 L999.6 399.7 L1000.2 400.6 L1000.8 401.5 L1001.5 402.5 L1002.1 403.5 L1002.8 404.5 L1003.4 405.6 L1004.1 406.6 L1004.7 407.7 L1005.4 408.8 L1006.0 409.9 L1006.7 410.9 L1007.3 412.0 L1008.0 413.1 L1008.6 414.1 L1009.3 415.2 L1009.9 416.2 L1010.6 417.2 L1011.2 418.2 L1011.9 419.1 L1012.5 420.0 L1013.1 420.9 L1013.8 421.7 L1014.4 422.5 L1015.1 423.3 L1015.7 424.0 L1016.4 424.7 L1017.0 425.3 L1017.7 425.9 L1018.3 426.4 L1019.0 426.9 L1019.6 427.4 L1020.3 427.8 L1020.9 428.2 L1021.6 428.5 L1022.2 428.8 L1022.9 429.0 L1023.5 429.2 L1024.2 429.4 L1024.8 429.5 L1025.5 429.6 L1026.1 429.6 L1026.7 429.6 L1027.4 429.6 L1028.0 429.5 L1028.7 429.5 L1029.3 429.4 L1030.0 429.2 L1030.6 429.1 L1031.3 428.9 L1031.9 428.7 L1032.6 428.5 L1033.2 428.3 L1033.9 428.0 L1034.5 427.8 L1035.2 427.5 L1035.8 427.3 L1036.5 427.0 L1037.1 426.7 L1037.8 426.5 L1038.4 426.2 L1039.0 425.9 L1039.7 425.7 L1040.3 425.4 L1041.0 425.2 L1041.6 425.0 L1042.3 424.8 L1042.9 424.6 L1043.6 424.4 L1044.2 424.3 L1044.9 424.1 L1045.5 424.0 L1046.2 423.9 L1046.8 423.8 L1047.5 423.7 L1048.1 423.7 L1048.8 423.7 L1049.4 423.7 L1050.1 423.7 L1050.7 423.8 L1051.4 423.9 L1052.0 424.0 L1052.6 424.1 L1053.3 424.2 L1053.9 424.4 L1054.6 424.6 L1055.2 424.8 L1055.9 425.0 L1056.5 425.2 L1057.2 425.5 L1057.8 425.8 L1058.5 426.1 L1059.1 426.4 L1059.8 426.7 L1060.4 427.0 L1061.1 427.4 L1061.7 427.7 L1062.4 428.1 L1063.0 428.5 L1063.7 428.8 L1064.3 429.2 L1064.9 429.6 L1065.6 430.0 L1066.2 430.4 L1066.9 430.7 L1067.5 431.1 L1068.2 431.5 L1068.8 431.8 L1069.5 432.2 L1070.1 432.5 L1070.8 432.8 L1071.4 433.2 L1072.1 433.5 L1072.7 433.7 L1073.4 434.0 L1074.0 434.3 L1074.7 434.5 L1075.3 434.7 L1076.0 434.9 L1076.6 435.1 L1077.2 435.2 L1077.9 435.3 L1078.5 435.4 L1079.2 435.5 L1079.8 435.5 L1080.5 435.6 L1081.1 435.6 L1081.8 435.5 L1082.4 435.5 L1083.1 435.4 L1083.7 435.3 L1084.4 435.1 L1085.0 435.0 L1085.7 434.8 L1086.3 434.6 L1087.0 434.3 L1087.6 434.1 L1088.3 433.8 L1088.9 433.5 L1089.6 433.2 L1090.2 432.8 L1090.8 432.4 L1091.5 432.1 L1092.1 431.7 L1092.8 431.2 L1093.4 430.8 L1094.1 430.3 L1094.7 429.9 L1095.4 429.4 L1096.0 428.9 L1096.7 428.4 L1097.3 427.9 L1098.0 427.4 L1098.6 426.9 L1099.3 426.3 L1099.9 425.8 L1100.6 425.3 L1101.2 424.8 L1101.9 424.2 L1102.5 423.7 L1103.2 423.2 L1103.8 422.7 L1104.4 422.2 L1105.1 421.7 L1105.7 421.2 L1106.4 420.8 L1107.0 420.3 L1107.7 419.9 L1108.3 419.5 L1109.0 419.1 L1109.6 418.7 L1110.3 418.3 L1110.9 418.0 L1111.6 417.6 L1112.2 417.3 L1112.9 417.1 L1113.5 416.8 L1114.2 416.6 L1114.8 416.4 L1115.5 416.2 L1116.1 416.0 L1116.7 415.9 L1117.4 415.8 L1118.0 415.7 L1118.7 415.7 L1119.3 415.7 L1120.0 415.7 L1120.6 415.7 L1121.3 415.8 L1121.9 415.8 L1122.6 416.0 L1123.2 416.1 L1123.9 416.3 L1124.5 416.4 L1125.2 416.7 L1125.8 416.9 L1126.5 417.2 L1127.1 417.4 L1127.8 417.7 L1128.4 418.1 L1129.1 418.4 L1129.7 418.8 L1130.3 419.2 L1131.0 419.6 L1131.6 420.0 L1132.3 420.4 L1132.9 420.8 L1133.6 421.3 L1134.2 421.7 L1134.9 422.2 L1135.5 422.7 L1136.2 423.2 L1136.8 423.7 L1137.5 424.2 L1138.1 424.7 L1138.8 425.2 L1139.4 425.7 L1140.1 426.2 L1140.7 426.7 L1141.4 427.1 L1142.0 427.6 L1142.6 428.1 L1143.3 428.6 L1143.9 429.1 L1144.6 429.5 L1145.2 429.9 L1145.9 430.4 L1146.5 430.8 L1147.2 431.2 L1147.8 431.6 L1148.5 432.0 L1149.1 432.3 L1149.8 432.7 L1150.4 433.0 L1151.1 433.3 L1151.7 433.6 L1152.4 433.8 L1153.0 434.1 L1153.7 434.3 L1154.3 434.5 L1155.0 434.6 L1155.6 434.8 L1156.2 434.9 L1156.9 435.0 L1157.5 435.1 L1158.2 435.2 L1158.8 435.2 L1159.5 435.2 L1160.1 435.2 L1160.8 435.2 L1161.4 435.1 L1162.1 435.0 L1162.7 434.9 L1163.4 434.8 L1164.0 434.7 L1164.7 434.5 L1165.3 434.3 L1166.0 434.1 L1166.6 433.9 L1167.3 433.7 L1167.9 433.4 L1168.5 433.1 L1169.2 432.9 L1169.8 432.6 L1170.5 432.2 L1171.1 431.9 L1171.8 431.6 L1172.4 431.2 L1173.1 430.9 L1173.7 430.5 L1174.4 430.1 L1175.0 429.7 L1175.7 429.4 L1176.3 429.0 L1177.0 428.6 L1177.6 428.2 L1178.3 427.8 L1178.9 427.4 L1179.6 427.0 L1180.2 426.6 L1180.9 426.2 L1181.5 425.8 L1182.1 425.4 L1182.8 425.0 L1183.4 424.6 L1184.1 424.3 L1184.7 423.9 L1185.4 423.5 L1186.0 423.2 L1186.7 422.9 L1187.3 422.6 L1188.0 422.2 L1188.6 422.0 L1189.3 421.7 L1189.9 421.4 L1190.6 421.2 L1191.2 420.9 L1191.9 420.7 L1192.5 420.5 L1193.2 420.3 L1193.8 420.1 L1193.8 702.7 L1193.2 702.5 L1192.5 702.3 L1191.9 702.1 L1191.2 701.9 L1190.6 701.6 L1189.9 701.4 L1189.3 701.1 L1188.6 700.8 L1188.0 700.6 L1187.3 700.2 L1186.7 699.9 L1186.0 699.6 L1185.4 699.3 L1184.7 698.9 L1184.1 698.5 L1183.4 698.2 L1182.8 697.8 L1182.1 697.4 L1181.5 697.0 L1180.9 696.6 L1180.2 696.2 L1179.6 695.8 L1178.9 695.4 L1178.3 695.0 L1177.6 694.6 L1177.0 694.2 L1176.3 693.8 L1175.7 693.4 L1175.0 693.1 L1174.4 692.7 L1173.7 692.3 L1173.1 691.9 L1172.4 691.6 L1171.8 691.2 L1171.1 690.9 L1170.5 690.6 L1169.8 690.2 L1169.2 689.9 L1168.5 689.7 L1167.9 689.4 L1167.3 689.1 L1166.6 688.9 L1166.0 688.7 L1165.3 688.5 L1164.7 688.3 L1164.0 688.1 L1163.4 688.0 L1162.7 687.9 L1162.1 687.8 L1161.4 687.7 L1160.8 687.6 L1160.1 687.6 L1159.5 687.6 L1158.8 687.6 L1158.2 687.6 L1157.5 687.7 L1156.9 687.8 L1156.2 687.9 L1155.6 688.0 L1155.0 688.2 L1154.3 688.3 L1153.7 688.5 L1153.0 688.7 L1152.4 689.0 L1151.7 689.2 L1151.1 689.5 L1150.4 689.8 L1149.8 690.1 L1149.1 690.5 L1148.5 690.8 L1147.8 691.2 L1147.2 691.6 L1146.5 692.0 L1145.9 692.4 L1145.2 692.9 L1144.6 693.3 L1143.9 693.7 L1143.3 694.2 L1142.6 694.7 L1142.0 695.2 L1141.4 695.7 L1140.7 696.1 L1140.1 696.6 L1139.4 697.1 L1138.8 697.6 L1138.1 698.1 L1137.5 698.6 L1136.8 699.1 L1136.2 699.6 L1135.5 700.1 L1134.9 700.6 L1134.2 701.1 L1133.6 701.5 L1132.9 702.0 L1132.3 702.4 L1131.6 702.8 L1131.0 703.2 L1130.3 703.6 L1129.7 704.0 L1129.1 704.4 L1128.4 704.7 L1127.8 705.1 L1127.1 705.4 L1126.5 705.6 L1125.8 705.9 L1125.2 706.1 L1124.5 706.4 L1123.9 706.5 L1123.2 706.7 L1122.6 706.8 L1121.9 707.0 L1121.3 707.0 L1120.6 707.1 L1120.0 707.1 L1119.3 707.1 L1118.7 707.1 L1118.0 707.1 L1117.4 707.0 L1116.7 706.9 L1116.1 706.8 L1115.5 706.6 L1114.8 706.4 L1114.2 706.2 L1113.5 706.0 L1112.9 705.7 L1112.2 705.5 L1111.6 705.2 L1110.9 704.8 L1110.3 704.5 L1109.6 704.1 L1109.0 703.7 L1108.3 703.3 L1107.7 702.9 L1107.0 702.5 L1106.4 702.0 L1105.7 701.6 L1105.1 701.1 L1104.4 700.6 L1103.8 700.1 L1103.2 699.6 L1102.5 699.1 L1101.9 698.6 L1101.2 698.0 L1100.6 697.5 L1099.9 697.0 L1099.3 696.5 L1098.6 695.9 L1098.0 695.4 L1097.3 694.9 L1096.7 694.4 L1096.0 693.9 L1095.4 693.4 L1094.7 692.9 L1094.1 692.5 L1093.4 692.0 L1092.8 691.6 L1092.1 691.1 L1091.5 690.7 L1090.8 690.4 L1090.2 690.0 L1089.6 689.6 L1088.9 689.3 L1088.3 689.0 L1087.6 688.7 L1087.0 688.5 L1086.3 688.2 L1085.7 688.0 L1085.0 687.8 L1084.4 687.7 L1083.7 687.5 L1083.1 687.4 L1082.4 687.3 L1081.8 687.3 L1081.1 687.2 L1080.5 687.2 L1079.8 687.3 L1079.2 687.3 L1078.5 687.4 L1077.9 687.5 L1077.2 687.6 L1076.6 687.7 L1076.0 687.9 L1075.3 688.1 L1074.7 688.3 L1074.0 688.5 L1073.4 688.8 L1072.7 689.1 L1072.1 689.3 L1071.4 689.6 L1070.8 690.0 L1070.1 690.3 L1069.5 690.6 L1068.8 691.0 L1068.2 691.3 L1067.5 691.7 L1066.9 692.1 L1066.2 692.4 L1065.6 692.8 L1064.9 693.2 L1064.3 693.6 L1063.7 694.0 L1063.0 694.3 L1062.4 694.7 L1061.7 695.1 L1061.1 695.4 L1060.4 695.8 L1059.8 696.1 L1059.1 696.4 L1058.5 696.7 L1057.8 697.0 L1057.2 697.3 L1056.5 697.6 L1055.9 697.8 L1055.2 698.0 L1054.6 698.2 L1053.9 698.4 L1053.3 698.6 L1052.6 698.7 L1052.0 698.8 L1051.4 698.9 L1050.7 699.0 L1050.1 699.1 L1049.4 699.1 L1048.8 699.1 L1048.1 699.1 L1047.5 699.1 L1046.8 699.0 L1046.2 698.9 L1045.5 698.8 L1044.9 698.7 L1044.2 698.5 L1043.6 698.4 L1042.9 698.2 L1042.3 698.0 L1041.6 697.8 L1041.0 697.6 L1040.3 697.4 L1039.7 697.1 L1039.0 696.9 L1038.4 696.6 L1037.8 696.3 L1037.1 696.1 L1036.5 695.8 L1035.8 695.5 L1035.2 695.3 L1034.5 695.0 L1033.9 694.8 L1033.2 694.5 L1032.6 694.3 L1031.9 694.1 L1031.3 693.9 L1030.6 693.7 L1030.0 693.6 L1029.3 693.4 L1028.7 693.3 L1028.0 693.3 L1027.4 693.2 L1026.7 693.2 L1026.1 693.2 L1025.5 693.2 L1024.8 693.3 L1024.2 693.4 L1023.5 693.6 L1022.9 693.8 L1022.2 694.0 L1021.6 694.3 L1020.9 694.6 L1020.3 695.0 L1019.6 695.4 L1019.0 695.9 L1018.3 696.4 L1017.7 696.9 L1017.0 697.5 L1016.4 698.1 L1015.7 698.8 L1015.1 699.5 L1014.4 700.3 L1013.8 701.1 L1013.1 701.9 L1012.5 702.8 L1011.9 703.7 L1011.2 704.6 L1010.6 705.6 L1009.9 706.6 L1009.3 707.6 L1008.6 708.7 L1008.0 709.7 L1007.3 710.8 L1006.7 711.9 L1006.0 712.9 L1005.4 714.0 L1004.7 715.1 L1004.1 716.2 L1003.4 717.2 L1002.8 718.3 L1002.1 719.3 L1001.5 720.3 L1000.8 721.3 L1000.2 722.2 L999.6 723.1 L998.9 723.9 L998.3 724.7 L997.6 725.5 L997.0 726.2 L996.3 726.8 L995.7 727.3 L995.0 727.7 L994.4 728.1 L993.7 728.4 L993.1 728.6 L992.4 728.7 L991.8 728.7 L991.1 728.6 L990.5 728.4 L989.8 728.0 L989.2 727.6 L988.5 727.0 L987.9 726.3 L987.2 725.5 L986.6 724.5 L986.0 723.4 L985.3 722.2 L984.7 720.9 L984.0 719.4 L983.4 717.8 L982.7 716.0 L982.1 714.1 L981.4 712.1 L980.8 710.0 L980.1 707.7 L979.5 705.3 L978.8 702.7 L978.2 700.1 L977.5 697.3 L976.9 694.4 L976.2 691.4 L975.6 688.3 L974.9 685.1 L974.3 681.8 L973.7 678.5Z" fill="#f1e9e5"/>
<path d="M1183.6 424.6 L1183.9 424.4 L1184.2 424.2 L1184.5 424.0 L1184.8 423.9 L1185.1 423.7 L1185.4 423.5 L1185.7 423.4 L1186.0 423.2 L1186.3 423.1 L1186.6 422.9 L1186.9 422.8 L1187.2 422.6 L1187.5 422.5 L1187.8 422.3 L1188.1 422.2 L1188.4 422.0 L1188.7 421.9 L1189.0 421.8 L1189.4 421.6 L1189.7 421.5 L1189.7 701.3 L1189.4 701.2 L1189.0 701.0 L1188.7 700.9 L1188.4 700.8 L1188.1 700.6 L1187.8 700.5 L1187.5 700.3 L1187.2 700.2 L1186.9 700.0 L1186.6 699.9 L1186.3 699.7 L1186.0 699.6 L1185.7 699.4 L1185.4 699.3 L1185.1 699.1 L1184.8 698.9 L1184.5 698.8 L1184.2 698.6 L1183.9 698.4 L1183.6 698.2Z" fill="#b2eaea"/>
<line x1="929" y1="561.4" x2="1276" y2="561.4" stroke="#000" stroke-width="1.1"/>
<path d="M1271 556.9L1275.5 561.4L1271 565.9" fill="none" stroke="#000" stroke-width="1.1"/>
<line x1="1038.4" y1="121" x2="1038.4" y2="946" stroke="#000" stroke-width="1.1"/>
<path d="M1033.9 127.5L1038.4 123L1042.9 127.5" fill="none" stroke="#000" stroke-width="1.1"/>
<line x1="1034.4" y1="756.4" x2="1038.4" y2="756.4" stroke="#000" stroke-width="1"/>
<text x="1032.4" y="760.6" font-size="12.5" text-anchor="end" fill="#000">-15</text>
<line x1="1034.4" y1="691.4" x2="1038.4" y2="691.4" stroke="#000" stroke-width="1"/>
<text x="1032.4" y="695.6" font-size="12.5" text-anchor="end" fill="#000">-10</text>
<line x1="1034.4" y1="626.4" x2="1038.4" y2="626.4" stroke="#000" stroke-width="1"/>
<text x="1032.4" y="630.6" font-size="12.5" text-anchor="end" fill="#000">-5</text>
<line x1="1034.4" y1="496.4" x2="1038.4" y2="496.4" stroke="#000" stroke-width="1"/>
<text x="1032.4" y="500.6" font-size="12.5" text-anchor="end" fill="#000">5</text>
<line x1="1034.4" y1="431.4" x2="1038.4" y2="431.4" stroke="#000" stroke-width="1"/>
<text x="1032.4" y="435.6" font-size="12.5" text-anchor="end" fill="#000">10</text>
<line x1="1034.4" y1="366.4" x2="1038.4" y2="366.4" stroke="#000" stroke-width="1"/>
<text x="1032.4" y="370.6" font-size="12.5" text-anchor="end" fill="#000">15</text>
<line x1="1034.4" y1="301.4" x2="1038.4" y2="301.4" stroke="#000" stroke-width="1"/>
<text x="1032.4" y="305.6" font-size="12.5" text-anchor="end" fill="#000">20</text>
<line x1="1034.4" y1="236.4" x2="1038.4" y2="236.4" stroke="#000" stroke-width="1"/>
<text x="1032.4" y="240.6" font-size="12.5" text-anchor="end" fill="#000">25</text>
<text x="1031.2" y="558.6" font-size="12.5" text-anchor="end">0</text>
<line x1="973.7" y1="557.4" x2="973.7" y2="561.4" stroke="#000" stroke-width="1"/>
<text x="974.2" y="576.5" font-size="12.5" text-anchor="middle">-5</text>
<line x1="1103.2" y1="557.4" x2="1103.2" y2="561.4" stroke="#000" stroke-width="1"/>
<text x="1103.7" y="576.5" font-size="12.5" text-anchor="middle">5</text>
<line x1="1167.9" y1="557.4" x2="1167.9" y2="561.4" stroke="#000" stroke-width="1"/>
<text x="1168.4" y="576.5" font-size="12.5" text-anchor="middle">10</text>
<line x1="1232.7" y1="557.4" x2="1232.7" y2="561.4" stroke="#000" stroke-width="1"/>
<text x="1233.2" y="576.5" font-size="12.5" text-anchor="middle">15</text>
<text x="1044.8" y="576.5" font-size="12.5">0</text>
<line x1="973.7" y1="444.3" x2="973.7" y2="678.5" stroke="#ff8000" stroke-width="2.6"/>
<line x1="1193.8" y1="420.1" x2="1193.8" y2="702.7" stroke="#ff8000" stroke-width="2.6"/>
<path d="M973.7 444.3 L974.3 441.0 L974.9 437.7 L975.6 434.5 L976.2 431.4 L976.9 428.4 L977.5 425.5 L978.2 422.7 L978.8 420.1 L979.5 417.5 L980.1 415.1 L980.8 412.8 L981.4 410.7 L982.1 408.7 L982.7 406.8 L983.4 405.0 L984.0 403.4 L984.7 401.9 L985.3 400.6 L986.0 399.4 L986.6 398.3 L987.2 397.3 L987.9 396.5 L988.5 395.8 L989.2 395.2 L989.8 394.8 L990.5 394.4 L991.1 394.2 L991.8 394.1 L992.4 394.1 L993.1 394.2 L993.7 394.4 L994.4 394.7 L995.0 395.1 L995.7 395.5 L996.3 396.0 L997.0 396.6 L997.6 397.3 L998.3 398.1 L998.9 398.9 L999.6 399.7 L1000.2 400.6 L1000.8 401.5 L1001.5 402.5 L1002.1 403.5 L1002.8 404.5 L1003.4 405.6 L1004.1 406.6 L1004.7 407.7 L1005.4 408.8 L1006.0 409.9 L1006.7 410.9 L1007.3 412.0 L1008.0 413.1 L1008.6 414.1 L1009.3 415.2 L1009.9 416.2 L1010.6 417.2 L1011.2 418.2 L1011.9 419.1 L1012.5 420.0 L1013.1 420.9 L1013.8 421.7 L1014.4 422.5 L1015.1 423.3 L1015.7 424.0 L1016.4 424.7 L1017.0 425.3 L1017.7 425.9 L1018.3 426.4 L1019.0 426.9 L1019.6 427.4 L1020.3 427.8 L1020.9 428.2 L1021.6 428.5 L1022.2 428.8 L1022.9 429.0 L1023.5 429.2 L1024.2 429.4 L1024.8 429.5 L1025.5 429.6 L1026.1 429.6 L1026.7 429.6 L1027.4 429.6 L1028.0 429.5 L1028.7 429.5 L1029.3 429.4 L1030.0 429.2 L1030.6 429.1 L1031.3 428.9 L1031.9 428.7 L1032.6 428.5 L1033.2 428.3 L1033.9 428.0 L1034.5 427.8 L1035.2 427.5 L1035.8 427.3 L1036.5 427.0 L1037.1 426.7 L1037.8 426.5 L1038.4 426.2 L1039.0 425.9 L1039.7 425.7 L1040.3 425.4 L1041.0 425.2 L1041.6 425.0 L1042.3 424.8 L1042.9 424.6 L1043.6 424.4 L1044.2 424.3 L1044.9 424.1 L1045.5 424.0 L1046.2 423.9 L1046.8 423.8 L1047.5 423.7 L1048.1 423.7 L1048.8 423.7 L1049.4 423.7 L1050.1 423.7 L1050.7 423.8 L1051.4 423.9 L1052.0 424.0 L1052.6 424.1 L1053.3 424.2 L1053.9 424.4 L1054.6 424.6 L1055.2 424.8 L1055.9 425.0 L1056.5 425.2 L1057.2 425.5 L1057.8 425.8 L1058.5 426.1 L1059.1 426.4 L1059.8 426.7 L1060.4 427.0 L1061.1 427.4 L1061.7 427.7 L1062.4 428.1 L1063.0 428.5 L1063.7 428.8 L1064.3 429.2 L1064.9 429.6 L1065.6 430.0 L1066.2 430.4 L1066.9 430.7 L1067.5 431.1 L1068.2 431.5 L1068.8 431.8 L1069.5 432.2 L1070.1 432.5 L1070.8 432.8 L1071.4 433.2 L1072.1 433.5 L1072.7 433.7 L1073.4 434.0 L1074.0 434.3 L1074.7 434.5 L1075.3 434.7 L1076.0 434.9 L1076.6 435.1 L1077.2 435.2 L1077.9 435.3 L1078.5 435.4 L1079.2 435.5 L1079.8 435.5 L1080.5 435.6 L1081.1 435.6 L1081.8 435.5 L1082.4 435.5 L1083.1 435.4 L1083.7 435.3 L1084.4 435.1 L1085.0 435.0 L1085.7 434.8 L1086.3 434.6 L1087.0 434.3 L1087.6 434.1 L1088.3 433.8 L1088.9 433.5 L1089.6 433.2 L1090.2 432.8 L1090.8 432.4 L1091.5 432.1 L1092.1 431.7 L1092.8 431.2 L1093.4 430.8 L1094.1 430.3 L1094.7 429.9 L1095.4 429.4 L1096.0 428.9 L1096.7 428.4 L1097.3 427.9 L1098.0 427.4 L1098.6 426.9 L1099.3 426.3 L1099.9 425.8 L1100.6 425.3 L1101.2 424.8 L1101.9 424.2 L1102.5 423.7 L1103.2 423.2 L1103.8 422.7 L1104.4 422.2 L1105.1 421.7 L1105.7 421.2 L1106.4 420.8 L1107.0 420.3 L1107.7 419.9 L1108.3 419.5 L1109.0 419.1 L1109.6 418.7 L1110.3 418.3 L1110.9 418.0 L1111.6 417.6 L1112.2 417.3 L1112.9 417.1 L1113.5 416.8 L1114.2 416.6 L1114.8 416.4 L1115.5 416.2 L1116.1 416.0 L1116.7 415.9 L1117.4 415.8 L1118.0 415.7 L1118.7 415.7 L1119.3 415.7 L1120.0 415.7 L1120.6 415.7 L1121.3 415.8 L1121.9 415.8 L1122.6 416.0 L1123.2 416.1 L1123.9 416.3 L1124.5 416.4 L1125.2 416.7 L1125.8 416.9 L1126.5 417.2 L1127.1 417.4 L1127.8 417.7 L1128.4 418.1 L1129.1 418.4 L1129.7 418.8 L1130.3 419.2 L1131.0 419.6 L1131.6 420.0 L1132.3 420.4 L1132.9 420.8 L1133.6 421.3 L1134.2 421.7 L1134.9 422.2 L1135.5 422.7 L1136.2 423.2 L1136.8 423.7 L1137.5 424.2 L1138.1 424.7 L1138.8 425.2 L1139.4 425.7 L1140.1 426.2 L1140.7 426.7 L1141.4 427.1 L1142.0 427.6 L1142.6 428.1 L1143.3 428.6 L1143.9 429.1 L1144.6 429.5 L1145.2 429.9 L1145.9 430.4 L1146.5 430.8 L1147.2 431.2 L1147.8 431.6 L1148.5 432.0 L1149.1 432.3 L1149.8 432.7 L1150.4 433.0 L1151.1 433.3 L1151.7 433.6 L1152.4 433.8 L1153.0 434.1 L1153.7 434.3 L1154.3 434.5 L1155.0 434.6 L1155.6 434.8 L1156.2 434.9 L1156.9 435.0 L1157.5 435.1 L1158.2 435.2 L1158.8 435.2 L1159.5 435.2 L1160.1 435.2 L1160.8 435.2 L1161.4 435.1 L1162.1 435.0 L1162.7 434.9 L1163.4 434.8 L1164.0 434.7 L1164.7 434.5 L1165.3 434.3 L1166.0 434.1 L1166.6 433.9 L1167.3 433.7 L1167.9 433.4 L1168.5 433.1 L1169.2 432.9 L1169.8 432.6 L1170.5 432.2 L1171.1 431.9 L1171.8 431.6 L1172.4 431.2 L1173.1 430.9 L1173.7 430.5 L1174.4 430.1 L1175.0 429.7 L1175.7 429.4 L1176.3 429.0 L1177.0 428.6 L1177.6 428.2 L1178.3 427.8 L1178.9 427.4 L1179.6 427.0 L1180.2 426.6 L1180.9 426.2 L1181.5 425.8 L1182.1 425.4 L1182.8 425.0 L1183.4 424.6 L1184.1 424.3 L1184.7 423.9 L1185.4 423.5 L1186.0 423.2 L1186.7 422.9 L1187.3 422.6 L1188.0 422.2 L1188.6 422.0 L1189.3 421.7 L1189.9 421.4 L1190.6 421.2 L1191.2 420.9 L1191.9 420.7 L1192.5 420.5 L1193.2 420.3 L1193.8 420.1" fill="none" stroke="#ff0033" stroke-width="2.6" stroke-linejoin="round"/>
<path d="M973.7 678.5 L974.3 681.8 L974.9 685.1 L975.6 688.3 L976.2 691.4 L976.9 694.4 L977.5 697.3 L978.2 700.1 L978.8 702.7 L979.5 705.3 L980.1 707.7 L980.8 710.0 L981.4 712.1 L982.1 714.1 L982.7 716.0 L983.4 717.8 L984.0 719.4 L984.7 720.9 L985.3 722.2 L986.0 723.4 L986.6 724.5 L987.2 725.5 L987.9 726.3 L988.5 727.0 L989.2 727.6 L989.8 728.0 L990.5 728.4 L991.1 728.6 L991.8 728.7 L992.4 728.7 L993.1 728.6 L993.7 728.4 L994.4 728.1 L995.0 727.7 L995.7 727.3 L996.3 726.8 L997.0 726.2 L997.6 725.5 L998.3 724.7 L998.9 723.9 L999.6 723.1 L1000.2 722.2 L1000.8 721.3 L1001.5 720.3 L1002.1 719.3 L1002.8 718.3 L1003.4 717.2 L1004.1 716.2 L1004.7 715.1 L1005.4 714.0 L1006.0 712.9 L1006.7 711.9 L1007.3 710.8 L1008.0 709.7 L1008.6 708.7 L1009.3 707.6 L1009.9 706.6 L1010.6 705.6 L1011.2 704.6 L1011.9 703.7 L1012.5 702.8 L1013.1 701.9 L1013.8 701.1 L1014.4 700.3 L1015.1 699.5 L1015.7 698.8 L1016.4 698.1 L1017.0 697.5 L1017.7 696.9 L1018.3 696.4 L1019.0 695.9 L1019.6 695.4 L1020.3 695.0 L1020.9 694.6 L1021.6 694.3 L1022.2 694.0 L1022.9 693.8 L1023.5 693.6 L1024.2 693.4 L1024.8 693.3 L1025.5 693.2 L1026.1 693.2 L1026.7 693.2 L1027.4 693.2 L1028.0 693.3 L1028.7 693.3 L1029.3 693.4 L1030.0 693.6 L1030.6 693.7 L1031.3 693.9 L1031.9 694.1 L1032.6 694.3 L1033.2 694.5 L1033.9 694.8 L1034.5 695.0 L1035.2 695.3 L1035.8 695.5 L1036.5 695.8 L1037.1 696.1 L1037.8 696.3 L1038.4 696.6 L1039.0 696.9 L1039.7 697.1 L1040.3 697.4 L1041.0 697.6 L1041.6 697.8 L1042.3 698.0 L1042.9 698.2 L1043.6 698.4 L1044.2 698.5 L1044.9 698.7 L1045.5 698.8 L1046.2 698.9 L1046.8 699.0 L1047.5 699.1 L1048.1 699.1 L1048.8 699.1 L1049.4 699.1 L1050.1 699.1 L1050.7 699.0 L1051.4 698.9 L1052.0 698.8 L1052.6 698.7 L1053.3 698.6 L1053.9 698.4 L1054.6 698.2 L1055.2 698.0 L1055.9 697.8 L1056.5 697.6 L1057.2 697.3 L1057.8 697.0 L1058.5 696.7 L1059.1 696.4 L1059.8 696.1 L1060.4 695.8 L1061.1 695.4 L1061.7 695.1 L1062.4 694.7 L1063.0 694.3 L1063.7 694.0 L1064.3 693.6 L1064.9 693.2 L1065.6 692.8 L1066.2 692.4 L1066.9 692.1 L1067.5 691.7 L1068.2 691.3 L1068.8 691.0 L1069.5 690.6 L1070.1 690.3 L1070.8 690.0 L1071.4 689.6 L1072.1 689.3 L1072.7 689.1 L1073.4 688.8 L1074.0 688.5 L1074.7 688.3 L1075.3 688.1 L1076.0 687.9 L1076.6 687.7 L1077.2 687.6 L1077.9 687.5 L1078.5 687.4 L1079.2 687.3 L1079.8 687.3 L1080.5 687.2 L1081.1 687.2 L1081.8 687.3 L1082.4 687.3 L1083.1 687.4 L1083.7 687.5 L1084.4 687.7 L1085.0 687.8 L1085.7 688.0 L1086.3 688.2 L1087.0 688.5 L1087.6 688.7 L1088.3 689.0 L1088.9 689.3 L1089.6 689.6 L1090.2 690.0 L1090.8 690.4 L1091.5 690.7 L1092.1 691.1 L1092.8 691.6 L1093.4 692.0 L1094.1 692.5 L1094.7 692.9 L1095.4 693.4 L1096.0 693.9 L1096.7 694.4 L1097.3 694.9 L1098.0 695.4 L1098.6 695.9 L1099.3 696.5 L1099.9 697.0 L1100.6 697.5 L1101.2 698.0 L1101.9 698.6 L1102.5 699.1 L1103.2 699.6 L1103.8 700.1 L1104.4 700.6 L1105.1 701.1 L1105.7 701.6 L1106.4 702.0 L1107.0 702.5 L1107.7 702.9 L1108.3 703.3 L1109.0 703.7 L1109.6 704.1 L1110.3 704.5 L1110.9 704.8 L1111.6 705.2 L1112.2 705.5 L1112.9 705.7 L1113.5 706.0 L1114.2 706.2 L1114.8 706.4 L1115.5 706.6 L1116.1 706.8 L1116.7 706.9 L1117.4 707.0 L1118.0 707.1 L1118.7 707.1 L1119.3 707.1 L1120.0 707.1 L1120.6 707.1 L1121.3 707.0 L1121.9 707.0 L1122.6 706.8 L1123.2 706.7 L1123.9 706.5 L1124.5 706.4 L1125.2 706.1 L1125.8 705.9 L1126.5 705.6 L1127.1 705.4 L1127.8 705.1 L1128.4 704.7 L1129.1 704.4 L1129.7 704.0 L1130.3 703.6 L1131.0 703.2 L1131.6 702.8 L1132.3 702.4 L1132.9 702.0 L1133.6 701.5 L1134.2 701.1 L1134.9 700.6 L1135.5 700.1 L1136.2 699.6 L1136.8 699.1 L1137.5 698.6 L1138.1 698.1 L1138.8 697.6 L1139.4 697.1 L1140.1 696.6 L1140.7 696.1 L1141.4 695.7 L1142.0 695.2 L1142.6 694.7 L1143.3 694.2 L1143.9 693.7 L1144.6 693.3 L1145.2 692.9 L1145.9 692.4 L1146.5 692.0 L1147.2 691.6 L1147.8 691.2 L1148.5 690.8 L1149.1 690.5 L1149.8 690.1 L1150.4 689.8 L1151.1 689.5 L1151.7 689.2 L1152.4 689.0 L1153.0 688.7 L1153.7 688.5 L1154.3 688.3 L1155.0 688.2 L1155.6 688.0 L1156.2 687.9 L1156.9 687.8 L1157.5 687.7 L1158.2 687.6 L1158.8 687.6 L1159.5 687.6 L1160.1 687.6 L1160.8 687.6 L1161.4 687.7 L1162.1 687.8 L1162.7 687.9 L1163.4 688.0 L1164.0 688.1 L1164.7 688.3 L1165.3 688.5 L1166.0 688.7 L1166.6 688.9 L1167.3 689.1 L1167.9 689.4 L1168.5 689.7 L1169.2 689.9 L1169.8 690.2 L1170.5 690.6 L1171.1 690.9 L1171.8 691.2 L1172.4 691.6 L1173.1 691.9 L1173.7 692.3 L1174.4 692.7 L1175.0 693.1 L1175.7 693.4 L1176.3 693.8 L1177.0 694.2 L1177.6 694.6 L1178.3 695.0 L1178.9 695.4 L1179.6 695.8 L1180.2 696.2 L1180.9 696.6 L1181.5 697.0 L1182.1 697.4 L1182.8 697.8 L1183.4 698.2 L1184.1 698.5 L1184.7 698.9 L1185.4 699.3 L1186.0 699.6 L1186.7 699.9 L1187.3 700.2 L1188.0 700.6 L1188.6 700.8 L1189.3 701.1 L1189.9 701.4 L1190.6 701.6 L1191.2 701.9 L1191.9 702.1 L1192.5 702.3 L1193.2 702.5 L1193.8 702.7" fill="none" stroke="#ff0033" stroke-width="2.6" stroke-linejoin="round"/>
<circle cx="973.7" cy="444.3" r="3.6" fill="#4d4d4d" stroke="#000" stroke-width="0.8"/>
<circle cx="973.7" cy="678.5" r="3.6" fill="#4d4d4d" stroke="#000" stroke-width="0.8"/>
<circle cx="1193.8" cy="420.1" r="3.6" fill="#4d4d4d" stroke="#000" stroke-width="0.8"/>
<circle cx="1193.8" cy="702.7" r="3.6" fill="#4d4d4d" stroke="#000" stroke-width="0.8"/>
<circle cx="1186.4" cy="423.0" r="3.6" fill="#0000ff" stroke="#000" stroke-width="0.8"/>
<circle cx="1186.4" cy="699.8" r="3.6" fill="#0000ff" stroke="#000" stroke-width="0.8"/>
<circle cx="973.7" cy="561.4" r="5.2" fill="#ff0033" stroke="#000" stroke-width="1"/>
<circle cx="1193.8" cy="561.4" r="5.2" fill="#ff0033" stroke="#000" stroke-width="1"/>
<text x="956" y="451.5" font-size="12.5" fill="#ff0033">f(x)</text>
<text x="954" y="710" font-size="12.5" fill="#ff0033">-f(x)</text>
<text x="977.5" y="550" font-size="13" fill="#ff0033">x</text><text x="985" y="556.7" font-size="13" fill="#ff0033">min</text>
<text x="1198" y="550" font-size="13" fill="#ff0033">x</text><text x="1205" y="556.7" font-size="13" fill="#ff0033">max</text>
<path d="M1196 545.5V550M1204 546H1198.5M1196.5 553H1203" stroke="#6a6aff" stroke-width="1" fill="none"/>
<rect x="935" y="128" width="331" height="83" fill="#ccff66"/>
<text x="940.5" y="146.7" font-size="14" font-weight="bold" font-style="italic" letter-spacing="0.95">Volumen des Rotationskörpers der</text>
<text x="940.5" y="169.7" font-size="14" font-weight="bold" font-style="italic" letter-spacing="0.97">Funktion f (x) bei Rotation um die x-Achse</text>
<text x="940" y="198.5" font-size="16.5" font-weight="bold" font-style="italic" fill="#000">f</text>
<text x="950.5" y="198.5" font-size="16" font-weight="normal" font-style="italic" fill="#000">(</text>
<text x="956" y="198.5" font-size="16.5" font-weight="bold" font-style="italic" fill="#000">x</text>
<text x="968.5" y="198.5" font-size="16" font-weight="normal" font-style="italic" fill="#000">)</text>
<text x="981" y="198.5" font-size="17" font-weight="normal" font-style="normal" fill="#000">=</text>
<text x="999.5" y="198.5" font-size="16.5" font-weight="bold" font-style="italic" fill="#000">a</text>
<text x="1013.5" y="198.5" font-size="16.5" font-weight="bold" font-style="italic" fill="#000">e</text>
<text x="1025" y="191" font-size="11" font-weight="normal" font-style="normal" fill="#555">−</text>
<text x="1034.5" y="191" font-size="12" font-weight="bold" font-style="italic" fill="#000">bx</text>
<text x="1055.5" y="198.5" font-size="16.5" font-weight="bold" font-style="italic" fill="#000">cos</text>
<text x="1090.5" y="198.5" font-size="16" font-weight="normal" font-style="italic" fill="#000">(</text>
<text x="1097.5" y="198.5" font-size="16.5" font-weight="bold" font-style="italic" fill="#000">x</text>
<text x="1110" y="198.5" font-size="16" font-weight="normal" font-style="italic" fill="#000">)</text>
<text x="1123.5" y="198.5" font-size="16.5" font-weight="bold" font-style="italic" fill="#000">x</text>
<text x="1140.5" y="198.5" font-size="17" font-weight="normal" font-style="normal" fill="#000">+</text>
<text x="1157.5" y="198.5" font-size="16.5" font-weight="bold" font-style="italic" fill="#000">c</text>
<line x1="951" y1="226.5" x2="982" y2="226.5" stroke="#000" stroke-width="1.2"/><circle cx="967.4" cy="226.5" r="3.2" fill="#000"/>
<text x="951" y="249.3" font-size="14">a = 0.4</text>
<line x1="1081" y1="223.5" x2="1112" y2="223.5" stroke="#000" stroke-width="1.2"/><circle cx="1096.5" cy="223.5" r="3.2" fill="#000"/>
<text x="1081" y="249" font-size="14">b = 0.18</text>
<line x1="1165" y1="220.5" x2="1197" y2="220.5" stroke="#000" stroke-width="1.2"/><circle cx="1190.5" cy="220.5" r="3.2" fill="#000"/>
<text x="1161" y="244" font-size="14">c = 10.4</text>
<line x1="947" y1="368.3" x2="998" y2="368.3" stroke="#000" stroke-width="1.2"/><circle cx="963.6" cy="368.3" r="3.2" fill="#000"/>
<text x="952.5" y="356.4" font-size="13">x</text><text x="959.5" y="362" font-size="13">min</text><text x="984" y="356.4" font-size="13">= -5</text>
<line x1="1168" y1="366.4" x2="1219" y2="366.4" stroke="#000" stroke-width="1.2"/><circle cx="1210.4" cy="366.4" r="3.2" fill="#000"/>
<text x="1197" y="354.3" font-size="13">x</text><text x="1204" y="360" font-size="13">max</text><text x="1230" y="354.3" font-size="13">= 12</text>
<rect x="940" y="791" width="315" height="57" fill="#ccff66"/>
<text x="944" y="822.5" font-size="16" font-weight="bold">V</text>
<text x="961" y="823" font-size="19" transform="translate(961 0) scale(1.25 1) translate(-961 0)">=</text>
<text x="980" y="822.5" font-size="17" font-style="italic">π</text><text x="997" y="822.5" font-size="12">∗</text>
<path d="M1010 836.5C1011.5 838 1013.5 837 1014 833L1019 804C1019.5 800.5 1021.5 799.5 1023.5 801" fill="none" stroke="#000" stroke-width="1.3"/>
<text x="1025" y="806.5" font-size="11" font-weight="bold">x</text><text x="1032" y="809" font-size="9">max</text>
<text x="1018" y="840" font-size="11" font-weight="bold">x</text><text x="1025" y="842.5" font-size="9">min</text>
<text x="1058" y="822.5" font-size="16" font-weight="bold">f</text><text x="1066" y="824" font-size="17">(</text><text x="1073" y="822.5" font-size="16" font-weight="bold">x</text><text x="1083" y="824" font-size="17">)</text><text x="1087" y="813" font-size="11">2</text>
<text x="1096" y="822.5" font-size="12">∗</text><text x="1108" y="822.5" font-size="16" font-weight="bold">dx</text>
<text x="1139" y="823" font-size="19" transform="translate(1139 0) scale(1.25 1) translate(-1139 0)">=</text>
<text x="1157.5" y="822.5" font-size="16.5" font-weight="bold" letter-spacing="0.7">6035.89 VE</text>
<text x="955" y="888" font-size="14" font-weight="bold" font-style="italic" fill="#7b7bef" letter-spacing="1.35">© Roman Chijner, Heidelberg 2012</text>
<text x="977.5" y="906.7" font-size="14" font-weight="bold" font-style="italic" fill="#7b7bef" letter-spacing="0.45">Gestaltungshilfe : Werner Knobloch</text>
</svg>
<!-- input bar -->
<div class="t" style="left:14px;top:954px;font-size:14px">Eingabe:</div>
<div class="a" style="left:72px;top:949px;width:1143px;height:25px;background:#fff;border-top:2px solid #404040;border-left:2px solid #404040;border-right:1px solid #fff;border-bottom:1px solid #fff"></div>
<script>
(function(){
var cv=document.getElementById('c3d'),g=cv.getContext('2d');
g.translate(-233,-121);
var OX=589.0,OY=533.4;
function P(p){return [OX+14.13*p[0]-8.8*p[1], OY-1.73*p[0]-2.78*p[1]-16.33*p[2]];}
var R3=[-0.5176,-0.832,0.197];
function D(p){return R3[0]*p[0]+R3[1]*p[1]+R3[2]*p[2];}
function f(u){return 0.4*Math.exp(-0.18*u)*Math.cos(u)*u+10.4;}
var YC=-7.65;
var items=[];
function clipY(poly){var out=[];
  for(var k=0;k<poly.length;k++){var A=poly[k],B=poly[(k+1)%poly.length];
    var ia=A[1]>=YC, ib=B[1]>=YC;
    if(ia) out.push(A);
    if(ia!=ib){var t=(YC-A[1])/(B[1]-A[1]);out.push([A[0]+t*(B[0]-A[0]),YC,A[2]+t*(B[2]-A[2])]);}
  }
  return out;}
function rgb(c){return 'rgb('+Math.round(c[0])+','+Math.round(c[1])+','+Math.round(c[2])+')';}
function mix(c1,c2,t){return [c1[0]+(c2[0]-c1[0])*t,c1[1]+(c2[1]-c1[1])*t,c1[2]+(c2[2]-c1[2])*t];}
function line(a,b,col,w){g.strokeStyle=col;g.lineWidth=w;g.beginPath();g.moveTo(a[0],a[1]);g.lineTo(b[0],b[1]);g.stroke();}
// back box edges
var BX=[[243,233],[500,311],[656,183.5],[914,262],[243,804],[500.5,883],[656,755],[914,833]];
g.lineCap='butt';
[[0,1],[0,2],[1,3],[2,3],[0,4],[2,6],[3,7],[4,5],[4,6],[5,7],[6,7]].forEach(function(e){line([BX[e[0]][0]+0.5,BX[e[0]][1]],[BX[e[1]][0]+0.5,BX[e[1]][1]],'#8a8a8a',1);});
// surface
var U0=-5,U1=12,NU=170,NV=180;
var pts=[];
for(var i=0;i<=NU;i++){var u=U0+(U1-U0)*i/NU,r=f(u),row=[];
 for(var j=0;j<=NV;j++){var v=-Math.PI+2*Math.PI*j/NV;row.push([u,r*Math.cos(v),r*Math.sin(v)]);}
 pts.push(row);}
for(var i=0;i<NU;i++)for(var j=0;j<NV;j++){
 var p00=pts[i][j],p10=pts[i+1][j],p11=pts[i+1][j+1],p01=pts[i][j+1];
 var e1=[p10[0]-p00[0],p10[1]-p00[1],p10[2]-p00[2]],e2=[p01[0]-p00[0],p01[1]-p00[1],p01[2]-p00[2]];
 var n=[e1[1]*e2[2]-e1[2]*e2[1],e1[2]*e2[0]-e1[0]*e2[2],e1[0]*e2[1]-e1[1]*e2[0]];
 var nl=-Math.hypot(n[0],n[1],n[2]);n=[n[0]/nl,n[1]/nl,n[2]/nl];
 var poly=[p00,p10,p11,p01];
 var allin=poly.every(function(p){return p[1]>=YC;});
 if(!allin){poly=clipY(poly); if(poly.length<3) continue;}
 var d=0;for(var k=0;k<poly.length;k++)d+=D(poly[k]);d/=poly.length;
 items.push({t:0,d:d,poly:poly,n:n,i:i,j:j,u:(p00[0]+p10[0])/2,allin:allin,c:[p00,p10,p11,p01]});
}
// disk + tube
var XS=11.6,RS=10.8,NS=96;
var cap=[];
for(var j=0;j<=NS;j++){var v=-Math.PI+2*Math.PI*j/NS;cap.push([XS,RS*Math.cos(v),RS*Math.sin(v)]);}
items.push({t:1,d:D([XS,0,0])-0.3,poly:clipY(cap)});
var RT=10.85,XT=11.8,postTube=[];
for(var j=0;j<NS;j++){var v0=-Math.PI+2*Math.PI*j/NS,v1=v0+2*Math.PI/NS;
 var a=[XT,RT*Math.cos(v0),RT*Math.sin(v0)],b=[XT,RT*Math.cos(v1),RT*Math.sin(v1)];
 if(a[1]<YC||b[1]<YC) continue;
 var vd=((v0+v1)/2)*180/Math.PI; if(vd<17&&vd>-59){postTube.push({a:a,b:b,j:j});continue;} items.push({t:2,d:(D(a)+D(b))/2+1.5,a:a,b:b,j:j});
}
var NR=144;for(var j=0;j<NR;j++){var v0=-Math.PI+2*Math.PI*j/NR,v1=v0+2*Math.PI/NR,r0=f(-5);
 var a=[-5,r0*Math.cos(v0),r0*Math.sin(v0)],b=[-5,r0*Math.cos(v1),r0*Math.sin(v1)];
 if(a[1]<YC||b[1]<YC) continue;
 items.push({t:3,d:(D(a)+D(b))/2+0.3,a:a,b:b,col:'#8a1010',w:2});}
// axes as segments
function axis(p0,p1,n,col,w,dash){for(var k=0;k<n;k++){var t0=k/n,t1=(k+1)/n;
 var a=[p0[0]+(p1[0]-p0[0])*t0,p0[1]+(p1[1]-p0[1])*t0,p0[2]+(p1[2]-p0[2])*t0];
 var b=[p0[0]+(p1[0]-p0[0])*t1,p0[1]+(p1[1]-p0[1])*t1,p0[2]+(p1[2]-p0[2])*t1];
 items.push({t:3,d:(D(a)+D(b))/2+0.15,a:a,b:b,col:col,w:w});}}
axis([-11,0,0],[17.2,0,0],112,'#e00000',2);
axis([0,-7.5,0],[0,19.5,0],108,'#006600',2);
axis([0,0,-18.8],[0,0,14.8],134,'#0000c0',2);
function dot(p,r,col){items.push({t:4,d:D(p)+0.2,p:p,r:r,col:col});}
[-10,-5,5,10,15].forEach(function(x){dot([x,0,0],3.2,'#dd0000');});
[10,5,-5].forEach(function(y){dot([0,y,0],3.5,'#007000');});
[5,-5,-15].forEach(function(z){items.push({t:5,d:D([0,0,z])+0.2,p:[0,0,z]});});
function drawTube(it){var a=P(it.a),b=P(it.b);var dx=b[0]-a[0],dy=b[1]-a[1],L=Math.hypot(dx,dy);dx/=L;dy/=L;var nx=-dy,ny=dx,w=4.0,e=0.6;
   var A=[a[0]-dx*e,a[1]-dy*e],B=[b[0]+dx*e,b[1]+dy*e];
   g.fillStyle='rgb(0,188,192)';g.beginPath();g.moveTo(A[0]+nx*w,A[1]+ny*w);g.lineTo(B[0]+nx*w,B[1]+ny*w);g.lineTo(B[0]-nx*w,B[1]-ny*w);g.lineTo(A[0]-nx*w,A[1]-ny*w);g.closePath();g.fill();
   line([A[0]+nx*1.5,A[1]+ny*1.5],[B[0]+nx*1.5,B[1]+ny*1.5],'rgb(30,230,235)',2.5);
   if(it.j%2==0)line([A[0]+2,A[1]],[B[0]+2,B[1]],'rgb(120,50,200)',2.2);}
items.sort(function(A,B){return A.d-B.d;});
var YEL=[222,215,130],PINK=[230,170,210],DRED=[140,20,20];
function sm(x,a,b){var t=Math.min(1,Math.max(0,(x-a)/(b-a)));return t*t*(3-2*t);}
function midp(a,b){return [(a[0]+b[0])/2,(a[1]+b[1])/2,(a[2]+b[2])/2];}
for(var k=0;k<items.length;k++){var it=items[k];
 if(it.t==3){var a=P(it.a),b=P(it.b);g.lineCap='round';line(a,b,it.col,it.w);g.lineCap='butt';continue;}
 if(it.t==4){var a=P(it.p);g.fillStyle=it.col;g.beginPath();g.arc(a[0],a[1],it.r,0,7);g.fill();continue;}
 if(it.t==5){var a=P(it.p);g.fillStyle='#0000c0';g.fillRect(a[0]-4,a[1]-1.5,8,3);continue;}
 if(it.t==2){drawTube(it);continue;}
 var q=it.poly.map(P);
 var col, sc=null, vl=null, vstep=1, lw=1.25, vw=1;
 if(it.t==0){
  var dn=it.n[0]*R3[0]+it.n[1]*R3[1]+it.n[2]*R3[2];
  var ax=Math.abs(it.n[0]);
  var ringT=sm(ax,0.35,0.75)*(1-sm(it.u,-3.9,-3.5));
  var vz=(it.c[0][2]+it.c[2][2])/2;
  if(dn>0){
    col=mix([205,48,45],[176,34,36],ringT);
    sc=mix(mix(vz>0?YEL:[215,200,115],PINK,sm(it.u,6.5,9)),DRED,ringT);
    var vdeg=(-180+360*(it.j+0.5)/NV);
    vl=ringT>0.5?(vdeg<65?'rgb(200,178,80)':(vdeg<100?'rgb(140,22,20)':'rgb(165,60,205)')):(vz>0||it.u>7?'rgb(160,40,200)':'rgb(215,205,120)'); vstep=2;
    lw=ringT>0.5?1:(vz>0?2.1:2.1); vw=ringT>0.5?0.9:(vz>0?1.7:1.6);
  } else {
    col=[200,56,62];
    sc=mix(mix([218,200,85],[200,150,170],sm(it.u,3,7)),[195,80,205],sm(it.u,9.5,11.5));
    vl='rgb(220,192,72)'; vstep=1; lw=vz<0?1.6:1.2; vw=vz<0?1.4:1.2;
  }
 } else if(it.t==1){ col=[192,234,234]; }
 var cs=rgb(col);
 g.fillStyle=cs;g.strokeStyle=cs;g.lineWidth=0.5;
 g.beginPath();g.moveTo(q[0][0],q[0][1]);for(var m=1;m<q.length;m++)g.lineTo(q[m][0],q[m][1]);g.closePath();g.fill();if(it.t!=1)g.stroke();
 if(it.t==0 && it.allin){
   var c=it.c;
   if(it.i%2==0){var a=P(midp(c[0],c[1])),b=P(midp(c[3],c[2]));line(a,b,rgb(sc),lw);}
   if(it.j%vstep==0){var a=P(midp(c[0],c[3])),b=P(midp(c[1],c[2]));line(a,b,vl,vw);}
 }
}
postTube.forEach(drawTube);
line(P([4.3,0,0]),P([6,0,0]),'#e00000',2);(function(){var d5=P([5,0,0]);g.fillStyle='#dd0000';g.beginPath();g.arc(d5[0],d5[1],3.2,0,7);g.fill();})();
// dashed hidden x-axis part
g.setLineDash([6,5]);line(P([11.9,0,0]),P([16.3,0,0]),'#a03030',2);g.setLineDash([]);
var d15=P([15,0,0]);g.fillStyle='#a03030';g.beginPath();g.arc(d15[0],d15[1],3.3,0,7);g.fill();
line(P([16.4,0,0]),P([17.2,0,0]),'#e00000',2);
var d11=P([11.5,0,0]);g.fillStyle='#5577dd';g.beginPath();g.arc(d11[0],d11[1],2.8,0,7);g.fill();
g.strokeStyle='#5a7ae0';g.lineWidth=1;g.beginPath();g.moveTo(763.5,498);g.lineTo(763.5,503);g.moveTo(766,500.5);g.lineTo(772,500.5);g.moveTo(764,506.5);g.lineTo(770,506.5);g.moveTo(771.5,504);g.lineTo(771.5,509);g.stroke();
// front box edge
line([501,311],[501,883],'#8a8a8a',1);
// arrows
function tri(tip,dir,len,wid,col){var nx=-dir[1],ny=dir[0];g.fillStyle=col;g.beginPath();g.moveTo(tip[0],tip[1]);
 g.lineTo(tip[0]-dir[0]*len+nx*wid,tip[1]-dir[1]*len+ny*wid);g.lineTo(tip[0]-dir[0]*len-nx*wid,tip[1]-dir[1]*len-ny*wid);g.closePath();g.fill();}
var xd=[14.13,-1.73],xl=Math.hypot(xd[0],xd[1]);xd=[xd[0]/xl,xd[1]/xl];
tri([847,502.3],xd,20,4.5,'#e00000');
tri([589,272],[0,-1],21,5,'#0000c0');
// y arrow (leaf)
g.fillStyle='#006600';g.beginPath();g.moveTo(397.5,474.5);g.quadraticCurveTo(406,470,412,472.5);g.lineTo(417,478.5);g.quadraticCurveTo(412,484,405,482);g.closePath();g.fill();line([414,478],[422,481],'#006600',2);
// labels
g.font='13px "Liberation Sans"';g.textBaseline='alphabetic';
function lab(t,x,y,col,outline){if(outline){g.strokeStyle='#fff';g.lineWidth=2.5;g.strokeText(t,x,y);}g.fillStyle=col;g.fillText(t,x,y);}
lab('15',568,300,'#0000e0');lab('z',598,292,'#0000e0');lab('-15',560,791,'#0000e0');lab('-5',568,626,'#0000e0',true);
lab('x',827,495,'#e00000');lab('10',730,535,'#e00000');lab('15',800,526,'#8b2020');lab('5',653,537,'#e00000',true);lab('-5',509,556,'#e00000',true);
lab('y',404.5,472,'#006600');lab('10',433,570,'#e00000',true);lab('20',395,495,'#006600');lab('0',493,517,'#006600',true);lab('5',539,531,'#006600',true);lab('-5',620,558,'#006600',true);
var fb=document.getElementById('fb');if(fb)fb.parentNode.removeChild(fb);
})();

</script>
<div class="t" style="left:556px;top:61px;font-size:12px;font-weight:bold">Bewege</div>
<div class="t" style="left:556px;top:77px;font-size:12px">Wähle oder ziehe ein Objekt (Esc)</div>
<svg class="a" style="left:1195px;top:950px" width="60" height="25">
 <path d="M11 5L14.5 9.5H7.5Z M11 17L14.5 12.5H7.5Z" fill="#303030"/>
 <rect x="37.5" y="4" width="15" height="13" rx="2" fill="#d4d0c8" stroke="#606060" stroke-width="1.5"/>
 <path d="M41.5 10.5L46 7V14Z" fill="#606060"/>
</svg>
</body></html>
